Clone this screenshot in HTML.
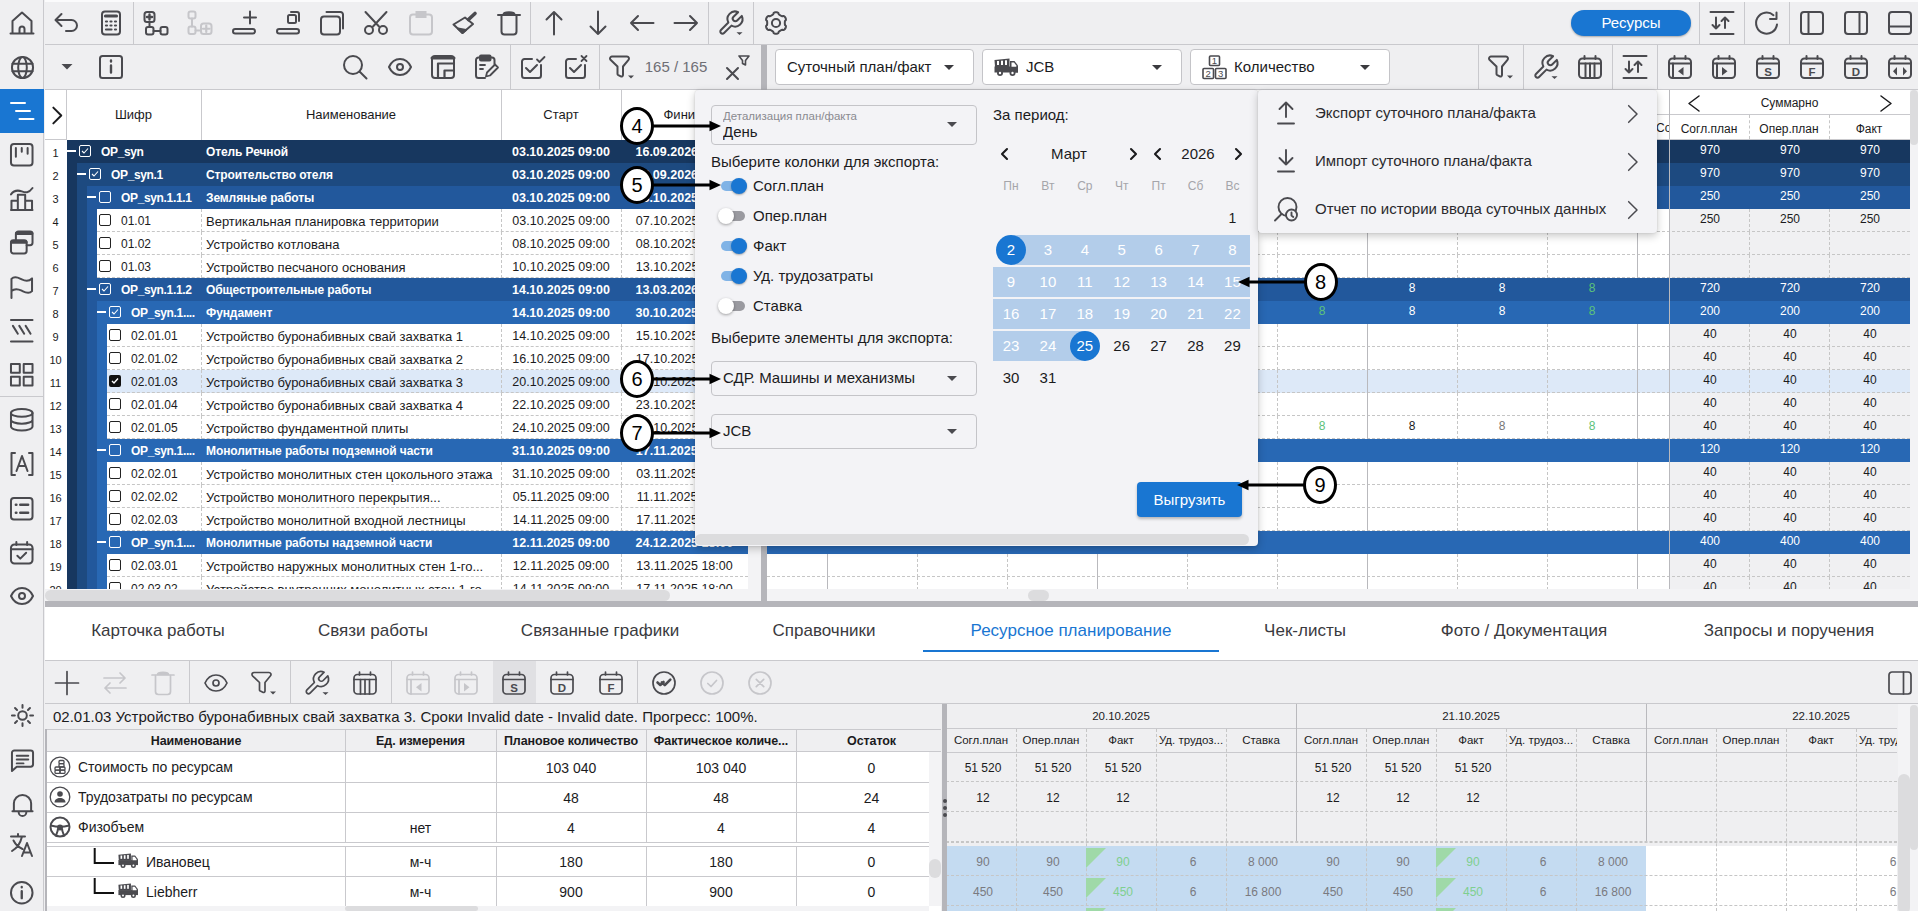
<!DOCTYPE html><html><head><meta charset="utf-8"><style>
html,body{margin:0;padding:0;}
body{width:1918px;height:911px;overflow:hidden;position:relative;background:#efeff1;font-family:"Liberation Sans",sans-serif;color:#1b1b1d;}
.a{position:absolute;box-sizing:border-box;}
.t{position:absolute;white-space:nowrap;overflow:hidden;box-sizing:border-box;}
.ic{position:absolute;overflow:visible;}
.hl{position:absolute;height:0;border-top:1px dashed #c6c6c6;}
.vl{position:absolute;width:0;border-left:1px dashed #c6c6c6;}
</style></head><body>
<div class="a" style="left:0px;top:0px;width:44px;height:911px;background:#efeff1;border-right:1px solid #c9c9cd;"></div>
<div class="a" style="left:0px;top:89px;width:44px;height:44px;background:#1976d2;"></div>
<div class="a" style="left:0px;top:396px;width:44px;height:1px;background:#c9c9cd;"></div>
<svg class="ic" style="left:10.00px;top:102.00px;width:24px;height:24px;color:#ffffff" viewBox="0 0 24 24" fill="none" stroke="currentColor" stroke-width="2.0" stroke-linecap="round" stroke-linejoin="round"><path d="M1 1h14M6 9h14M9.5 17h14"/></svg>
<svg class="ic" style="left:10.00px;top:10.80px;width:24px;height:24px;color:#4a4a4f" viewBox="0 0 24 24" fill="none" stroke="currentColor" stroke-width="2.0" stroke-linecap="round" stroke-linejoin="round"><path d="M0.5 22.5h23M2.5 22.5V10L12 1.5 21.5 10v12.5M9.5 22.5v-4.5a2.5 2.5 0 0 1 5 0v4.5"/></svg>
<svg class="ic" style="left:10.50px;top:55.50px;width:23px;height:23px;color:#4a4a4f" viewBox="0 0 24 24" fill="none" stroke="currentColor" stroke-width="2.0869565217391304" stroke-linecap="round" stroke-linejoin="round"><circle cx="12" cy="12" r="11"/><ellipse cx="12" cy="12" rx="4.5" ry="11"/><path d="M1.5 8h21M1.5 16h21"/></svg>
<svg class="ic" style="left:10.25px;top:143.25px;width:23.5px;height:23.5px;color:#4a4a4f" viewBox="0 0 24 24" fill="none" stroke="currentColor" stroke-width="2.0425531914893615" stroke-linecap="round" stroke-linejoin="round"><rect x="1" y="1" width="22" height="22" rx="3"/><path d="M6 5v9M12 5v4M18 5v6"/></svg>
<svg class="ic" style="left:10.25px;top:187.25px;width:23.5px;height:23.5px;color:#4a4a4f" viewBox="0 0 24 24" fill="none" stroke="currentColor" stroke-width="2.0425531914893615" stroke-linecap="round" stroke-linejoin="round"><path d="M1.5 23.5V14h6.5v9.5M8 23.5V8h7.5v15.5M15.5 23.5V14h7v9.5zM1 23.5h22M1 7.5C4 3.5 8 3 12 4.5S19 6.5 23 1"/></svg>
<svg class="ic" style="left:10.25px;top:231.25px;width:23.5px;height:23.5px;color:#4a4a4f" viewBox="0 0 24 24" fill="none" stroke="currentColor" stroke-width="2.0425531914893615" stroke-linecap="round" stroke-linejoin="round"><rect x="1" y="9.5" width="16" height="13.5" rx="2.5"/><path d="M6 9.5V3a2.5 2.5 0 0 1 2.5-2.5H20.5A2.5 2.5 0 0 1 23 3v9a2.5 2.5 0 0 1-2.5 2.5H17"/><path d="M1.5 11.5h15M6.5 2.5h16" stroke-width="3"/></svg>
<svg class="ic" style="left:10.25px;top:274.95px;width:23.5px;height:23.5px;color:#4a4a4f" viewBox="0 0 24 24" fill="none" stroke="currentColor" stroke-width="2.0425531914893615" stroke-linecap="round" stroke-linejoin="round"><path d="M1.5 23.5V4C5 0 9 3 12 4.5S19 7 22.5 3.5v13C19 20 15 17.5 12 16S5 13 1.5 16.5"/></svg>
<svg class="ic" style="left:10.25px;top:318.95px;width:23.5px;height:23.5px;color:#4a4a4f" viewBox="0 0 24 24" fill="none" stroke="currentColor" stroke-width="2.0425531914893615" stroke-linecap="round" stroke-linejoin="round"><path d="M1 1h22M1 23h22M3 7l5 8M9.5 7l5 8M16 7l5 8"/></svg>
<svg class="ic" style="left:10.25px;top:362.65px;width:23.5px;height:23.5px;color:#4a4a4f" viewBox="0 0 24 24" fill="none" stroke="currentColor" stroke-width="2.0425531914893615" stroke-linecap="round" stroke-linejoin="round"><rect x="1" y="1" width="9" height="9"/><rect x="14" y="1" width="9" height="9"/><rect x="1" y="14" width="9" height="9"/><rect x="14" y="14" width="9" height="9"/></svg>
<svg class="ic" style="left:10.25px;top:407.55px;width:23.5px;height:23.5px;color:#4a4a4f" viewBox="0 0 24 24" fill="none" stroke="currentColor" stroke-width="2.0425531914893615" stroke-linecap="round" stroke-linejoin="round"><ellipse cx="12" cy="5" rx="11" ry="4"/><path d="M1 5v14c0 2.2 4.9 4 11 4s11-1.8 11-4V5M1 12c0 2.2 4.9 4 11 4s11-1.8 11-4"/></svg>
<svg class="ic" style="left:10.00px;top:452.30px;width:24px;height:24px;color:#4a4a4f" viewBox="0 0 24 24" fill="none" stroke="currentColor" stroke-width="2.0" stroke-linecap="round" stroke-linejoin="round"><path d="M5 1H1.5v22H5M19 1h3.5v22H19M6.5 19L12 4l5.5 15M8.5 14h7"/></svg>
<svg class="ic" style="left:10.25px;top:496.55px;width:23.5px;height:23.5px;color:#4a4a4f" viewBox="0 0 24 24" fill="none" stroke="currentColor" stroke-width="2.0425531914893615" stroke-linecap="round" stroke-linejoin="round"><rect x="1" y="1" width="22" height="22" rx="3"/><path d="M6 8h.5M6 16h.5M10.5 8h8M10.5 16h8" stroke-width="2.6"/></svg>
<svg class="ic" style="left:10.25px;top:540.75px;width:23.5px;height:23.5px;color:#4a4a4f" viewBox="0 0 24 24" fill="none" stroke="currentColor" stroke-width="2.0425531914893615" stroke-linecap="round" stroke-linejoin="round"><rect x="1" y="3.5" width="22" height="19.5" rx="3.5"/><path d="M1 8.5h22M6.5 1v3M17.5 1v3"/><path d="M7.5 15l3 3 6-6"/></svg>
<svg class="ic" style="left:10.00px;top:584.30px;width:24px;height:24px;color:#4a4a4f" viewBox="0 0 24 24" fill="none" stroke="currentColor" stroke-width="2.0" stroke-linecap="round" stroke-linejoin="round"><path d="M1 12C3.5 6.5 7.5 4 12 4s8.5 2.5 11 8c-2.5 5.5-6.5 8-11 8S3.5 17.5 1 12z"/><circle cx="12" cy="12" r="3"/></svg>
<svg class="ic" style="left:10.50px;top:704.00px;width:23px;height:23px;color:#4a4a4f" viewBox="0 0 24 24" fill="none" stroke="currentColor" stroke-width="2.0869565217391304" stroke-linecap="round" stroke-linejoin="round"><circle cx="12" cy="12" r="4.5"/><path d="M12 1v3M12 20v3M1 12h3M20 12h3M4.2 4.2l2.1 2.1M17.7 17.7l2.1 2.1M4.2 19.8l2.1-2.1M17.7 6.3l2.1-2.1"/></svg>
<svg class="ic" style="left:10.50px;top:748.50px;width:23px;height:23px;color:#4a4a4f" viewBox="0 0 24 24" fill="none" stroke="currentColor" stroke-width="2.0869565217391304" stroke-linecap="round" stroke-linejoin="round"><path d="M1 4a2.5 2.5 0 0 1 2.5-2.5h17A2.5 2.5 0 0 1 23 4v12a2.5 2.5 0 0 1-2.5 2.5H6L1 23z"/><path d="M6 7h12M6 11h12M6 15h7"/></svg>
<svg class="ic" style="left:10.50px;top:792.50px;width:23px;height:23px;color:#4a4a4f" viewBox="0 0 24 24" fill="none" stroke="currentColor" stroke-width="2.0869565217391304" stroke-linecap="round" stroke-linejoin="round"><path d="M3 19V11a9 9 0 0 1 18 0v8zM1.5 19h21M8 20a4 4 0 0 0 8 0"/></svg>
<svg class="ic" style="left:10.00px;top:833.00px;width:24px;height:24px;color:#4a4a4f" viewBox="0 0 24 24" fill="none" stroke="currentColor" stroke-width="2.0" stroke-linecap="round" stroke-linejoin="round"><path d="M1 3.5h14M8 1v2.5M12 3.5C10 12 6.5 15 2 18M3.5 7.5c2 4 5.5 7 9 8.5M12 23l5-13 5 13M13.5 19.5h7"/></svg>
<svg class="ic" style="left:10.25px;top:880.75px;width:23.5px;height:23.5px;color:#4a4a4f" viewBox="0 0 24 24" fill="none" stroke="currentColor" stroke-width="2.0425531914893615" stroke-linecap="round" stroke-linejoin="round"><circle cx="12" cy="12" r="11"/><path d="M12 10.5v7M12 6v.5" stroke-width="2.4"/></svg>
<div class="a" style="left:45px;top:0px;width:1873px;height:45px;background:#efeff1;border-bottom:1px solid #c9c9cd;"></div>
<div class="a" style="left:45px;top:0px;width:1873px;height:2px;background:#fbfbfc;"></div>
<div class="a" style="left:133px;top:2px;width:1px;height:42px;background:#c9c9cd;"></div>
<div class="a" style="left:530px;top:2px;width:1px;height:42px;background:#c9c9cd;"></div>
<div class="a" style="left:708px;top:2px;width:1px;height:42px;background:#c9c9cd;"></div>
<div class="a" style="left:753px;top:2px;width:1px;height:42px;background:#c9c9cd;"></div>
<div class="a" style="left:1699px;top:2px;width:1px;height:42px;background:#c9c9cd;"></div>
<div class="a" style="left:1744px;top:2px;width:1px;height:42px;background:#c9c9cd;"></div>
<div class="a" style="left:1789px;top:2px;width:1px;height:42px;background:#c9c9cd;"></div>
<svg class="ic" style="left:55.00px;top:11.00px;width:24px;height:24px;color:#4a4a4f" viewBox="0 0 24 24" fill="none" stroke="currentColor" stroke-width="2.0" stroke-linecap="round" stroke-linejoin="round"><path d="M6.5 3L0.5 9l6 6"/><path d="M1 9H16.5a5.5 5.5 0 0 1 0 11H11"/></svg>
<svg class="ic" style="left:99.00px;top:11.00px;width:24px;height:24px;color:#4a4a4f" viewBox="0 0 24 24" fill="none" stroke="currentColor" stroke-width="2.0" stroke-linecap="round" stroke-linejoin="round"><rect x="3" y="0.5" width="18" height="23" rx="3"/><path d="M6.5 5h11" stroke-width="3.2"/><path d="M7 10.5h1M11.5 10.5h1M16 10.5h1M7 14.5h1M11.5 14.5h1M16 14.5h1M7 18.5h5.5M16 18.5h1" stroke-width="2.2"/></svg>
<svg class="ic" style="left:144.00px;top:11.00px;width:24px;height:24px;color:#4a4a4f" viewBox="0 0 24 24" fill="none" stroke="currentColor" stroke-width="2.0" stroke-linecap="round" stroke-linejoin="round"><rect x="0.5" y="1" width="10" height="10" rx="2.5"/><path d="M5.5 3.5v5M3 6h5" stroke-width="2.4"/><path d="M5.5 11v5M9.5 20h7"/><rect x="2" y="16" width="7.5" height="7.5" rx="2"/><rect x="16.5" y="16" width="7" height="7.5" rx="2"/></svg>
<svg class="ic" style="left:188.00px;top:11.00px;width:24px;height:24px;color:#c6c6ca" viewBox="0 0 24 24" fill="none" stroke="currentColor" stroke-width="2.0" stroke-linecap="round" stroke-linejoin="round"><rect x="0.5" y="0.5" width="7" height="7" rx="2"/><path d="M4 7.5v8M7.5 19.5h4"/><rect x="0.5" y="15.5" width="7" height="7.5" rx="2"/><rect x="13" y="12.5" width="10.5" height="10.5" rx="2.5"/><path d="M18.25 14.5v6.5M15 17.75h6.5" stroke-width="2.2"/></svg>
<svg class="ic" style="left:232.00px;top:11.00px;width:24px;height:24px;color:#4a4a4f" viewBox="0 0 24 24" fill="none" stroke="currentColor" stroke-width="2.0" stroke-linecap="round" stroke-linejoin="round"><rect x="1" y="18" width="22" height="4.5" rx="2.25"/><path d="M18 0.5v12M12 6.5h12"/></svg>
<svg class="ic" style="left:276.00px;top:11.00px;width:24px;height:24px;color:#4a4a4f" viewBox="0 0 24 24" fill="none" stroke="currentColor" stroke-width="2.0" stroke-linecap="round" stroke-linejoin="round"><rect x="1" y="18" width="22" height="4.5" rx="2.25"/><rect x="12" y="4" width="8" height="8" rx="1.5"/><path d="M15 1h6a2 2 0 0 1 2 2v7"/></svg>
<svg class="ic" style="left:320.00px;top:11.00px;width:24px;height:24px;color:#4a4a4f" viewBox="0 0 24 24" fill="none" stroke="currentColor" stroke-width="2.0" stroke-linecap="round" stroke-linejoin="round"><rect x="1" y="5.5" width="19" height="18" rx="3"/><path d="M6.5 1h14a2.5 2.5 0 0 1 2.5 2.5v14"/></svg>
<svg class="ic" style="left:364.20px;top:11.00px;width:24px;height:24px;color:#4a4a4f" viewBox="0 0 24 24" fill="none" stroke="currentColor" stroke-width="2.0" stroke-linecap="round" stroke-linejoin="round"><circle cx="5" cy="19" r="4"/><circle cx="19" cy="19" r="4"/><path d="M1.5 1L15 15.5M22.5 1L9 15.5" /></svg>
<svg class="ic" style="left:408.50px;top:11.00px;width:24px;height:24px;color:#c6c6ca" viewBox="0 0 24 24" fill="none" stroke="currentColor" stroke-width="2.0" stroke-linecap="round" stroke-linejoin="round"><rect x="1" y="3.5" width="22" height="20" rx="3"/><rect x="6.5" y="0" width="11" height="7" fill="currentColor" stroke="none"/></svg>
<svg class="ic" style="left:453.00px;top:11.00px;width:24px;height:24px;color:#4a4a4f" viewBox="0 0 24 24" fill="none" stroke="currentColor" stroke-width="2.0" stroke-linecap="round" stroke-linejoin="round"><path d="M0.5 13.5L12 6.5l8 6.5-10.5 9z"/><path d="M5 17.5l4.5 4.5 3.5-3z" fill="currentColor"/><path d="M15.5 8.5L22 2.5" stroke-width="3.6"/></svg>
<svg class="ic" style="left:496.50px;top:11.00px;width:24px;height:24px;color:#4a4a4f" viewBox="0 0 24 24" fill="none" stroke="currentColor" stroke-width="2.0" stroke-linecap="round" stroke-linejoin="round"><path d="M1 4h22"/><path d="M6.5 3.5C6.5 0.5 17.5 0.5 17.5 3.5z" fill="currentColor"/><path d="M4.5 4.5v16a3 3 0 0 0 3 3h9a3 3 0 0 0 3-3v-16"/></svg>
<svg class="ic" style="left:541.50px;top:11.00px;width:24px;height:24px;color:#4a4a4f" viewBox="0 0 24 24" fill="none" stroke="currentColor" stroke-width="2.0" stroke-linecap="round" stroke-linejoin="round"><path d="M12 23.5V1M4.5 8.5L12 1l7.5 7.5"/></svg>
<svg class="ic" style="left:585.50px;top:11.00px;width:24px;height:24px;color:#4a4a4f" viewBox="0 0 24 24" fill="none" stroke="currentColor" stroke-width="2.0" stroke-linecap="round" stroke-linejoin="round"><path d="M12 0.5V23M4.5 15.5L12 23l7.5-7.5"/></svg>
<svg class="ic" style="left:629.80px;top:11.00px;width:24px;height:24px;color:#4a4a4f" viewBox="0 0 24 24" fill="none" stroke="currentColor" stroke-width="2.0" stroke-linecap="round" stroke-linejoin="round"><path d="M23.5 12H1M8 5L1 12l7 7"/></svg>
<svg class="ic" style="left:674.00px;top:11.00px;width:24px;height:24px;color:#4a4a4f" viewBox="0 0 24 24" fill="none" stroke="currentColor" stroke-width="2.0" stroke-linecap="round" stroke-linejoin="round"><path d="M0.5 12H23M16 5l7 7-7 7"/></svg>
<svg class="ic" style="left:719.00px;top:11.00px;width:24px;height:24px;color:#4a4a4f" viewBox="0 0 24 24" fill="none" stroke="currentColor" stroke-width="2.0" stroke-linecap="round" stroke-linejoin="round"><path d="M19.13 1.19L14.51 5.81A2.6 2.6 0 0 0 18.19 9.49L22.81 4.87A7.5 7.5 0 0 1 12.49 14.63L5.06 22.06A2.2 2.2 0 0 1 1.94 18.94L9.37 11.51A7.5 7.5 0 0 1 19.13 1.19Z"/><path d="M17.5 21.3h6l-3 2.7z" fill="currentColor" stroke="none"/></svg>
<svg class="ic" style="left:763.70px;top:11.00px;width:24px;height:24px;color:#4a4a4f" viewBox="0 0 24 24" fill="none" stroke="currentColor" stroke-width="2.0" stroke-linecap="round" stroke-linejoin="round"><circle cx="12" cy="12" r="4.1"/><path d="M20.80 12.00 L20.80 12.31 L20.81 12.62 L20.83 12.93 L20.86 13.25 L20.90 13.57 L20.97 13.91 L21.12 14.27 L21.81 14.81 L21.91 15.22 L21.92 15.61 L21.88 15.99 L21.79 16.36 L21.68 16.72 L21.53 17.07 L21.35 17.40 L21.15 17.72 L20.92 18.02 L20.67 18.30 L20.39 18.56 L20.09 18.79 L19.75 18.98 L19.34 19.09 L18.53 18.76 L18.14 18.82 L17.81 18.93 L17.51 19.05 L17.22 19.19 L16.94 19.32 L16.67 19.47 L16.40 19.62 L16.14 19.78 L15.87 19.94 L15.61 20.11 L15.35 20.30 L15.09 20.50 L14.84 20.73 L14.59 21.03 L14.47 21.90 L14.17 22.20 L13.83 22.40 L13.48 22.55 L13.12 22.66 L12.75 22.74 L12.38 22.78 L12.00 22.80 L11.62 22.78 L11.25 22.74 L10.88 22.66 L10.52 22.55 L10.17 22.40 L9.83 22.20 L9.53 21.90 L9.41 21.03 L9.16 20.73 L8.91 20.50 L8.65 20.30 L8.39 20.11 L8.13 19.94 L7.86 19.78 L7.60 19.62 L7.33 19.47 L7.06 19.32 L6.78 19.19 L6.49 19.05 L6.19 18.93 L5.86 18.82 L5.47 18.76 L4.66 19.09 L4.25 18.98 L3.91 18.79 L3.61 18.56 L3.33 18.30 L3.08 18.02 L2.85 17.72 L2.65 17.40 L2.47 17.07 L2.32 16.72 L2.21 16.36 L2.12 15.99 L2.08 15.61 L2.09 15.22 L2.19 14.81 L2.88 14.27 L3.03 13.91 L3.10 13.57 L3.14 13.25 L3.17 12.93 L3.19 12.62 L3.20 12.31 L3.20 12.00 L3.20 11.69 L3.19 11.38 L3.17 11.07 L3.14 10.75 L3.10 10.43 L3.03 10.09 L2.88 9.73 L2.19 9.19 L2.09 8.78 L2.08 8.39 L2.12 8.01 L2.21 7.64 L2.32 7.28 L2.47 6.93 L2.65 6.60 L2.85 6.28 L3.08 5.98 L3.33 5.70 L3.61 5.44 L3.91 5.21 L4.25 5.02 L4.66 4.91 L5.47 5.24 L5.86 5.18 L6.19 5.07 L6.49 4.95 L6.78 4.81 L7.06 4.68 L7.33 4.53 L7.60 4.38 L7.86 4.22 L8.13 4.06 L8.39 3.89 L8.65 3.70 L8.91 3.50 L9.16 3.27 L9.41 2.97 L9.53 2.10 L9.83 1.80 L10.17 1.60 L10.52 1.45 L10.88 1.34 L11.25 1.26 L11.62 1.22 L12.00 1.20 L12.38 1.22 L12.75 1.26 L13.12 1.34 L13.48 1.45 L13.83 1.60 L14.17 1.80 L14.47 2.10 L14.59 2.97 L14.84 3.27 L15.09 3.50 L15.35 3.70 L15.61 3.89 L15.87 4.06 L16.14 4.22 L16.40 4.38 L16.67 4.53 L16.94 4.68 L17.22 4.81 L17.51 4.95 L17.81 5.07 L18.14 5.18 L18.53 5.24 L19.34 4.91 L19.75 5.02 L20.09 5.21 L20.39 5.44 L20.67 5.70 L20.92 5.98 L21.15 6.28 L21.35 6.60 L21.53 6.93 L21.68 7.28 L21.79 7.64 L21.88 8.01 L21.92 8.39 L21.91 8.78 L21.81 9.19 L21.12 9.73 L20.97 10.09 L20.90 10.43 L20.86 10.75 L20.83 11.07 L20.81 11.38 L20.80 11.69Z"/></svg>
<svg class="ic" style="left:1710.00px;top:11.00px;width:24px;height:24px;color:#4a4a4f" viewBox="0 0 24 24" fill="none" stroke="currentColor" stroke-width="2.0" stroke-linecap="round" stroke-linejoin="round"><path d="M0.5 1h23M0.5 23h23M6 6.5v11M2.5 14l3.5 3.5 3.5-3.5M15 17V6.5M11.5 10L15 6.5 18.5 10"/></svg>
<svg class="ic" style="left:1755.00px;top:11.00px;width:24px;height:24px;color:#4a4a4f" viewBox="0 0 24 24" fill="none" stroke="currentColor" stroke-width="2.0" stroke-linecap="round" stroke-linejoin="round"><path d="M22 13.5A10.5 10.5 0 1 1 18.5 4.2"/><path d="M21.5 1.5v6.5h-6.5"/></svg>
<svg class="ic" style="left:1800.00px;top:11.00px;width:24px;height:24px;color:#4a4a4f" viewBox="0 0 24 24" fill="none" stroke="currentColor" stroke-width="2.0" stroke-linecap="round" stroke-linejoin="round"><rect x="1" y="1" width="22" height="22" rx="3"/><path d="M8.5 1v22"/></svg>
<svg class="ic" style="left:1844.00px;top:11.00px;width:24px;height:24px;color:#4a4a4f" viewBox="0 0 24 24" fill="none" stroke="currentColor" stroke-width="2.0" stroke-linecap="round" stroke-linejoin="round"><rect x="1" y="1" width="22" height="22" rx="3"/><path d="M15.5 1v22"/></svg>
<svg class="ic" style="left:1888.00px;top:11.00px;width:24px;height:24px;color:#4a4a4f" viewBox="0 0 24 24" fill="none" stroke="currentColor" stroke-width="2.0" stroke-linecap="round" stroke-linejoin="round"><rect x="1" y="1" width="22" height="22" rx="3"/><path d="M1 15.5h22"/></svg>
<div class="a" style="left:1571px;top:10px;width:120px;height:26px;background:#1976d2;border-radius:13px;box-shadow:0 1px 2px rgba(0,0,0,.3);"></div>
<div class="t" style="left:1571px;top:10px;width:120px;height:26px;line-height:26px;text-align:center;color:#fff;font-size:15px;">Ресурсы</div>
<div class="a" style="left:45px;top:45px;width:1873px;height:45px;background:#efeff1;border-bottom:1px solid #c9c9cd;"></div>
<div class="a" style="left:510px;top:45px;width:1px;height:44px;background:#c9c9cd;"></div>
<div class="a" style="left:599px;top:45px;width:1px;height:44px;background:#c9c9cd;"></div>
<div class="a" style="left:1478px;top:45px;width:1px;height:44px;background:#c9c9cd;"></div>
<div class="a" style="left:1523px;top:45px;width:1px;height:44px;background:#c9c9cd;"></div>
<div class="a" style="left:1612px;top:45px;width:1px;height:44px;background:#c9c9cd;"></div>
<div class="a" style="left:1657px;top:45px;width:1px;height:44px;background:#c9c9cd;"></div>
<svg class="ic" style="left:60px;top:63px;width:14px;height:8px" viewBox="0 0 14 8"><path d="M1.5 1h11l-5.5 5.5z" fill="#4a4a4f"/></svg>
<svg class="ic" style="left:99.00px;top:55.00px;width:24px;height:24px;color:#4a4a4f" viewBox="0 0 24 24" fill="none" stroke="currentColor" stroke-width="2.0" stroke-linecap="round" stroke-linejoin="round"><rect x="1" y="1" width="22" height="22" rx="2.5"/><path d="M12 10.5v7M12 5.5v1" stroke-width="2.4"/></svg>
<svg class="ic" style="left:343.20px;top:55.00px;width:24px;height:24px;color:#4a4a4f" viewBox="0 0 24 24" fill="none" stroke="currentColor" stroke-width="2.0" stroke-linecap="round" stroke-linejoin="round"><circle cx="10" cy="10" r="9"/><path d="M16.5 16.5l7 7"/></svg>
<svg class="ic" style="left:387.50px;top:55.00px;width:24px;height:24px;color:#4a4a4f" viewBox="0 0 24 24" fill="none" stroke="currentColor" stroke-width="2.0" stroke-linecap="round" stroke-linejoin="round"><path d="M1 12C3.5 6.5 7.5 4 12 4s8.5 2.5 11 8c-2.5 5.5-6.5 8-11 8S3.5 17.5 1 12z"/><circle cx="12" cy="12" r="3"/></svg>
<svg class="ic" style="left:431.20px;top:55.00px;width:24px;height:24px;color:#4a4a4f" viewBox="0 0 24 24" fill="none" stroke="currentColor" stroke-width="2.0" stroke-linecap="round" stroke-linejoin="round"><rect x="1" y="1" width="22" height="22" rx="3"/><path d="M1 3h22" stroke-width="3"/><path d="M7 23V8.5h16M13.5 23v-7.5H23" stroke-width="2.2"/></svg>
<svg class="ic" style="left:475.20px;top:55.00px;width:24px;height:24px;color:#4a4a4f" viewBox="0 0 24 24" fill="none" stroke="currentColor" stroke-width="2.0" stroke-linecap="round" stroke-linejoin="round"><path d="M10 23H3.5A2.5 2.5 0 0 1 1 20.5V5a2.5 2.5 0 0 1 2.5-2.5H17A2.5 2.5 0 0 1 19.5 5v4"/><rect x="5" y="0.5" width="10.5" height="5" rx="1" fill="currentColor"/><path d="M5 10h5M5 14h3" stroke-width="1.8"/><path d="M11 21.5l1-4 8-8 3 3-8 8z" stroke-width="1.8"/></svg>
<svg class="ic" style="left:521.00px;top:55.00px;width:24px;height:24px;color:#4a4a4f" viewBox="0 0 24 24" fill="none" stroke="currentColor" stroke-width="2.0" stroke-linecap="round" stroke-linejoin="round"><path d="M20 10v10.5a2.5 2.5 0 0 1-2.5 2.5h-14A2.5 2.5 0 0 1 1 20.5v-14A2.5 2.5 0 0 1 3.5 4H11"/><path d="M5 13l4 4 7-7"/><path d="M16 4.5l2.5 2.5 5-5" stroke-width="1.8"/></svg>
<svg class="ic" style="left:564.50px;top:55.00px;width:24px;height:24px;color:#4a4a4f" viewBox="0 0 24 24" fill="none" stroke="currentColor" stroke-width="2.0" stroke-linecap="round" stroke-linejoin="round"><path d="M20 10v10.5a2.5 2.5 0 0 1-2.5 2.5h-14A2.5 2.5 0 0 1 1 20.5v-14A2.5 2.5 0 0 1 3.5 4H11"/><path d="M5 13l4 4 7-7"/><path d="M16.5 1l5 5M21.5 1l-5 5" stroke-width="1.8"/></svg>
<svg class="ic" style="left:609.00px;top:55.00px;width:24px;height:24px;color:#4a4a4f" viewBox="0 0 24 24" fill="none" stroke="currentColor" stroke-width="2.0" stroke-linecap="round" stroke-linejoin="round"><path d="M1 3.5a2 2 0 0 1 2-2h15a2 2 0 0 1 1.5 3.3L14 11.5V20a1.5 1.5 0 0 1-2.2 1.3l-2.5-1.2A1.5 1.5 0 0 1 8.5 19v-7.5L1.5 4.8A2 2 0 0 1 1 3.5z"/><path d="M19 20.5h6l-3 3z" fill="currentColor" stroke="none"/></svg>
<svg class="ic" style="left:726.00px;top:55.00px;width:24px;height:24px;color:#4a4a4f" viewBox="0 0 24 24" fill="none" stroke="currentColor" stroke-width="2.0" stroke-linecap="round" stroke-linejoin="round"><path d="M1 13l11 11M12 13L1 24"/><path d="M13 1h10l-3.5 4.5v4.5l-3-1.5v-3z" stroke-width="1.6"/></svg>
<svg class="ic" style="left:1488.00px;top:55.00px;width:24px;height:24px;color:#4a4a4f" viewBox="0 0 24 24" fill="none" stroke="currentColor" stroke-width="2.0" stroke-linecap="round" stroke-linejoin="round"><path d="M1 3.5a2 2 0 0 1 2-2h15a2 2 0 0 1 1.5 3.3L14 11.5V20a1.5 1.5 0 0 1-2.2 1.3l-2.5-1.2A1.5 1.5 0 0 1 8.5 19v-7.5L1.5 4.8A2 2 0 0 1 1 3.5z"/><path d="M19 20.5h6l-3 3z" fill="currentColor" stroke="none"/></svg>
<svg class="ic" style="left:1534.00px;top:55.00px;width:24px;height:24px;color:#4a4a4f" viewBox="0 0 24 24" fill="none" stroke="currentColor" stroke-width="2.0" stroke-linecap="round" stroke-linejoin="round"><path d="M19.13 1.19L14.51 5.81A2.6 2.6 0 0 0 18.19 9.49L22.81 4.87A7.5 7.5 0 0 1 12.49 14.63L5.06 22.06A2.2 2.2 0 0 1 1.94 18.94L9.37 11.51A7.5 7.5 0 0 1 19.13 1.19Z"/><path d="M17.5 21.3h6l-3 2.7z" fill="currentColor" stroke="none"/></svg>
<svg class="ic" style="left:1578.00px;top:55.00px;width:24px;height:24px;color:#4a4a4f" viewBox="0 0 24 24" fill="none" stroke="currentColor" stroke-width="2.0" stroke-linecap="round" stroke-linejoin="round"><rect x="1" y="3.5" width="22" height="19.5" rx="3.5"/><path d="M1 8.5h22M6.5 1v3M17.5 1v3"/><path d="M7.5 8.5v14.5M12 8.5v14.5M16.5 8.5v14.5"/></svg>
<svg class="ic" style="left:1623.00px;top:55.00px;width:24px;height:24px;color:#4a4a4f" viewBox="0 0 24 24" fill="none" stroke="currentColor" stroke-width="2.0" stroke-linecap="round" stroke-linejoin="round"><path d="M0.5 1h23M0.5 23h23M6 6.5v11M2.5 14l3.5 3.5 3.5-3.5M15 17V6.5M11.5 10L15 6.5 18.5 10"/></svg>
<svg class="ic" style="left:1668.00px;top:55.00px;width:24px;height:24px;color:#4a4a4f" viewBox="0 0 24 24" fill="none" stroke="currentColor" stroke-width="2.0" stroke-linecap="round" stroke-linejoin="round"><rect x="1" y="3.5" width="22" height="19.5" rx="3.5"/><path d="M1 8.5h22M6.5 1v3M17.5 1v3"/><path d="M5 8.5v14.5"/><path d="M15.5 12v8.5l-5.5-4.25z" fill="currentColor" stroke="none"/></svg>
<svg class="ic" style="left:1712.00px;top:55.00px;width:24px;height:24px;color:#4a4a4f" viewBox="0 0 24 24" fill="none" stroke="currentColor" stroke-width="2.0" stroke-linecap="round" stroke-linejoin="round"><rect x="1" y="3.5" width="22" height="19.5" rx="3.5"/><path d="M1 8.5h22M6.5 1v3M17.5 1v3"/><path d="M5 8.5v14.5"/><path d="M10 12v8.5l5.5-4.25z" fill="currentColor" stroke="none"/></svg>
<svg class="ic" style="left:1756.00px;top:55.00px;width:24px;height:24px;color:#4a4a4f" viewBox="0 0 24 24" fill="none" stroke="currentColor" stroke-width="2.0" stroke-linecap="round" stroke-linejoin="round"><rect x="1" y="3.5" width="22" height="19.5" rx="3.5"/><path d="M1 8.5h22M6.5 1v3M17.5 1v3"/><text x="12" y="20.5" font-size="11.5" font-weight="bold" text-anchor="middle" fill="currentColor" stroke="none" font-family="Liberation Sans">S</text></svg>
<svg class="ic" style="left:1800.00px;top:55.00px;width:24px;height:24px;color:#4a4a4f" viewBox="0 0 24 24" fill="none" stroke="currentColor" stroke-width="2.0" stroke-linecap="round" stroke-linejoin="round"><rect x="1" y="3.5" width="22" height="19.5" rx="3.5"/><path d="M1 8.5h22M6.5 1v3M17.5 1v3"/><text x="12" y="20.5" font-size="11.5" font-weight="bold" text-anchor="middle" fill="currentColor" stroke="none" font-family="Liberation Sans">F</text></svg>
<svg class="ic" style="left:1844.00px;top:55.00px;width:24px;height:24px;color:#4a4a4f" viewBox="0 0 24 24" fill="none" stroke="currentColor" stroke-width="2.0" stroke-linecap="round" stroke-linejoin="round"><rect x="1" y="3.5" width="22" height="19.5" rx="3.5"/><path d="M1 8.5h22M6.5 1v3M17.5 1v3"/><text x="12" y="20.5" font-size="11.5" font-weight="bold" text-anchor="middle" fill="currentColor" stroke="none" font-family="Liberation Sans">D</text></svg>
<svg class="ic" style="left:1888.00px;top:55.00px;width:24px;height:24px;color:#4a4a4f" viewBox="0 0 24 24" fill="none" stroke="currentColor" stroke-width="2.0" stroke-linecap="round" stroke-linejoin="round"><rect x="1" y="3.5" width="22" height="19.5" rx="3.5"/><path d="M1 8.5h22M6.5 1v3M17.5 1v3"/><path d="M9 12v8.5l-4-4.25zM15 12v8.5l4-4.25z" fill="currentColor" stroke="none"/></svg>
<div class="t" style="left:640px;top:56px;width:72px;height:22px;line-height:22px;text-align:center;font-size:15px;color:#6e6e74;">165 / 165</div>
<div class="a" style="left:775px;top:49px;width:199px;height:36px;background:#fff;border:1px solid #c4c4c8;border-radius:4px;"></div>
<svg class="ic" style="left:943px;top:64px;width:12px;height:8px" viewBox="0 0 12 8"><path d="M1 1h10l-5 5z" fill="#3a3a3e"/></svg>
<div class="t" style="left:787px;top:56px;width:153px;height:22px;line-height:22px;text-align:left;font-size:15px;color:#1b1b1d;">Суточный план/факт</div>
<div class="a" style="left:982px;top:49px;width:200px;height:36px;background:#fff;border:1px solid #c4c4c8;border-radius:4px;"></div>
<svg class="ic" style="left:1151px;top:64px;width:12px;height:8px" viewBox="0 0 12 8"><path d="M1 1h10l-5 5z" fill="#3a3a3e"/></svg>
<div class="t" style="left:1026px;top:56px;width:122px;height:22px;line-height:22px;text-align:left;font-size:15px;color:#1b1b1d;">JCB</div>
<svg class="ic" style="left:994px;top:58px;width:24px;height:18px" viewBox="0 0 24 18"><g fill="#4a4a4f"><path d="M0.5 2L15.5 0.5V9H1z"/><path d="M16 3h4.5l3.5 4.5V14.5H16z"/><rect x="0.5" y="8.5" width="23.5" height="6"/><circle cx="6" cy="15" r="3"/><circle cx="18.5" cy="15" r="3"/></g><g fill="#fff"><rect x="3" y="3" width="2" height="4"/><rect x="7" y="2.7" width="2" height="4.3"/><rect x="11" y="2.3" width="2" height="4.7"/><path d="M17.5 4.5h2.5l2.3 3v1.2H17.5z"/><circle cx="6" cy="15" r="1.2"/><circle cx="18.5" cy="15" r="1.2"/></g></svg>
<div class="a" style="left:1190px;top:49px;width:200px;height:36px;background:#fff;border:1px solid #c4c4c8;border-radius:4px;"></div>
<svg class="ic" style="left:1359px;top:64px;width:12px;height:8px" viewBox="0 0 12 8"><path d="M1 1h10l-5 5z" fill="#3a3a3e"/></svg>
<div class="t" style="left:1234px;top:56px;width:122px;height:22px;line-height:22px;text-align:left;font-size:15px;color:#1b1b1d;">Количество</div>
<svg class="ic" style="left:1202px;top:55px;width:25px;height:24px" viewBox="0 0 25 24"><g fill="none" stroke="#4a4a4f" stroke-width="1.6"><rect x="7.5" y="1" width="10" height="9.5" rx="1"/><rect x="1" y="13.5" width="10.5" height="10" rx="1"/><rect x="13.5" y="13.5" width="10.5" height="10" rx="1"/></g><g font-family="Liberation Sans" font-size="9.5" fill="#4a4a4f" text-anchor="middle"><text x="12.5" y="9.2">1</text><text x="6.25" y="21.8">2</text><text x="18.75" y="21.8">3</text></g></svg>
<div class="a" style="left:761px;top:45px;width:6px;height:562px;background:#b5b5ba;"></div>
<div class="a" style="left:45px;top:90px;width:716px;height:517px;background:#fff;"></div>
<div class="a" style="left:45px;top:90px;width:21px;height:50px;background:#fff;border-bottom:1px solid #c9c9cd;"></div>
<svg class="ic" style="left:46.50px;top:105.50px;width:19px;height:19px;color:#1b1b1d" viewBox="0 0 24 24" fill="none" stroke="currentColor" stroke-width="2.5" stroke-linecap="round" stroke-linejoin="round"><path d="M8 2l10 10-10 10"/></svg>
<div class="a" style="left:66px;top:90px;width:1px;height:50px;background:#c9c9cd;"></div>
<div class="a" style="left:201px;top:90px;width:1px;height:50px;background:#c9c9cd;"></div>
<div class="a" style="left:501px;top:90px;width:1px;height:50px;background:#c9c9cd;"></div>
<div class="a" style="left:621px;top:90px;width:1px;height:50px;background:#c9c9cd;"></div>
<div class="t" style="left:66px;top:90px;width:135px;height:50px;line-height:50px;text-align:center;font-size:13px;">Шифр</div>
<div class="t" style="left:201px;top:90px;width:300px;height:50px;line-height:50px;text-align:center;font-size:13px;">Наименование</div>
<div class="t" style="left:501px;top:90px;width:120px;height:50px;line-height:50px;text-align:center;font-size:13px;">Старт</div>
<div class="t" style="left:621px;top:90px;width:127px;height:50px;line-height:50px;text-align:center;font-size:13px;">Финиш</div>
<div class="a" style="left:45px;top:140px;width:716px;height:449px;overflow:hidden;">
<div class="t" style="left:0px;top:1.5px;width:21px;height:23px;line-height:23px;text-align:center;font-size:11px;color:#1b1b1d;">1</div>
<div class="a" style="left:22px;top:0px;width:681px;height:23px;background:#17375f;"></div>
<div class="a" style="left:22px;top:10px;width:9px;height:2px;background:#fff;"></div>
<div class="a" style="left:34px;top:5px;width:12px;height:12px;border:1.3px solid #fff;border-radius:2px;"></div>
<svg class="ic" style="left:36px;top:7px;width:8px;height:8px" viewBox="0 0 8 8"><path d="M1 4l2 2 4-4.5" fill="none" stroke="#fff" stroke-width="1.1"/></svg>
<div class="t" style="left:56px;top:1px;width:98px;height:23px;line-height:23px;text-align:left;font-size:12px;color:#fff;font-weight:bold;letter-spacing:-0.35px;">OP_syn</div>
<div class="t" style="left:161px;top:1px;width:295px;height:23px;line-height:23px;text-align:left;font-size:12px;color:#fff;font-weight:bold;letter-spacing:-0.1px;">Отель Речной</div>
<div class="t" style="left:456px;top:1px;width:120px;height:23px;line-height:23px;text-align:center;font-size:12.5px;color:#fff;font-weight:bold;">03.10.2025 09:00</div>
<div class="t" style="left:576px;top:1px;width:127px;height:23px;line-height:23px;text-align:center;font-size:12.5px;color:#fff;font-weight:bold;">16.09.2026 18:00</div>
<div class="t" style="left:0px;top:24.5px;width:21px;height:23px;line-height:23px;text-align:center;font-size:11px;color:#1b1b1d;">2</div>
<div class="a" style="left:22px;top:23px;width:10px;height:23px;background:#17375f;"></div>
<div class="a" style="left:32px;top:23px;width:671px;height:23px;background:#1d4a80;"></div>
<div class="a" style="left:32px;top:33px;width:9px;height:2px;background:#fff;"></div>
<div class="a" style="left:44px;top:28px;width:12px;height:12px;border:1.3px solid #fff;border-radius:2px;"></div>
<svg class="ic" style="left:46px;top:30px;width:8px;height:8px" viewBox="0 0 8 8"><path d="M1 4l2 2 4-4.5" fill="none" stroke="#fff" stroke-width="1.1"/></svg>
<div class="t" style="left:66px;top:24px;width:88px;height:23px;line-height:23px;text-align:left;font-size:12px;color:#fff;font-weight:bold;letter-spacing:-0.35px;">OP_syn.1</div>
<div class="t" style="left:161px;top:24px;width:295px;height:23px;line-height:23px;text-align:left;font-size:12px;color:#fff;font-weight:bold;letter-spacing:-0.1px;">Строительство отеля</div>
<div class="t" style="left:456px;top:24px;width:120px;height:23px;line-height:23px;text-align:center;font-size:12.5px;color:#fff;font-weight:bold;">03.10.2025 09:00</div>
<div class="t" style="left:576px;top:24px;width:127px;height:23px;line-height:23px;text-align:center;font-size:12.5px;color:#fff;font-weight:bold;">16.09.2026 18:00</div>
<div class="t" style="left:0px;top:47.5px;width:21px;height:23px;line-height:23px;text-align:center;font-size:11px;color:#1b1b1d;">3</div>
<div class="a" style="left:22px;top:46px;width:10px;height:23px;background:#17375f;"></div>
<div class="a" style="left:32px;top:46px;width:10px;height:23px;background:#1d4a80;"></div>
<div class="a" style="left:42px;top:46px;width:661px;height:23px;background:#22589c;"></div>
<div class="a" style="left:42px;top:56px;width:9px;height:2px;background:#fff;"></div>
<div class="a" style="left:54px;top:51px;width:12px;height:12px;border:1.3px solid #fff;border-radius:2px;"></div>
<div class="t" style="left:76px;top:47px;width:78px;height:23px;line-height:23px;text-align:left;font-size:12px;color:#fff;font-weight:bold;letter-spacing:-0.35px;">OP_syn.1.1.1</div>
<div class="t" style="left:161px;top:47px;width:295px;height:23px;line-height:23px;text-align:left;font-size:12px;color:#fff;font-weight:bold;letter-spacing:-0.1px;">Земляные работы</div>
<div class="t" style="left:456px;top:47px;width:120px;height:23px;line-height:23px;text-align:center;font-size:12.5px;color:#fff;font-weight:bold;">03.10.2025 09:00</div>
<div class="t" style="left:576px;top:47px;width:127px;height:23px;line-height:23px;text-align:center;font-size:12.5px;color:#fff;font-weight:bold;">13.10.2025 18:00</div>
<div class="t" style="left:0px;top:70.5px;width:21px;height:23px;line-height:23px;text-align:center;font-size:11px;color:#1b1b1d;">4</div>
<div class="a" style="left:22px;top:69px;width:10px;height:23px;background:#17375f;"></div>
<div class="a" style="left:32px;top:69px;width:10px;height:23px;background:#1d4a80;"></div>
<div class="a" style="left:42px;top:69px;width:10px;height:23px;background:#22589c;"></div>
<div class="a" style="left:52px;top:69px;width:651px;height:23px;background:#fff;"></div>
<div class="a" style="left:54px;top:74px;width:12px;height:12px;border:1.3px solid #222;border-radius:2px;background:#fff;"></div>
<div class="t" style="left:76px;top:70px;width:78px;height:23px;line-height:23px;text-align:left;font-size:12px;color:#1b1b1d;">01.01</div>
<div class="t" style="left:161px;top:70px;width:295px;height:23px;line-height:23px;text-align:left;font-size:13px;color:#1b1b1d;">Вертикальная планировка территории</div>
<div class="t" style="left:456px;top:70px;width:120px;height:23px;line-height:23px;text-align:center;font-size:12.5px;color:#1b1b1d;">03.10.2025 09:00</div>
<div class="t" style="left:576px;top:70px;width:127px;height:23px;line-height:23px;text-align:center;font-size:12.5px;color:#1b1b1d;">07.10.2025 18:00</div>
<div class="hl" style="left:52px;top:91px;width:651px;"></div>
<div class="vl" style="left:156px;top:69px;height:23px;"></div>
<div class="vl" style="left:456px;top:69px;height:23px;"></div>
<div class="vl" style="left:576px;top:69px;height:23px;"></div>
<div class="t" style="left:0px;top:93.5px;width:21px;height:23px;line-height:23px;text-align:center;font-size:11px;color:#1b1b1d;">5</div>
<div class="a" style="left:22px;top:92px;width:10px;height:23px;background:#17375f;"></div>
<div class="a" style="left:32px;top:92px;width:10px;height:23px;background:#1d4a80;"></div>
<div class="a" style="left:42px;top:92px;width:10px;height:23px;background:#22589c;"></div>
<div class="a" style="left:52px;top:92px;width:651px;height:23px;background:#fff;"></div>
<div class="a" style="left:54px;top:97px;width:12px;height:12px;border:1.3px solid #222;border-radius:2px;background:#fff;"></div>
<div class="t" style="left:76px;top:93px;width:78px;height:23px;line-height:23px;text-align:left;font-size:12px;color:#1b1b1d;">01.02</div>
<div class="t" style="left:161px;top:93px;width:295px;height:23px;line-height:23px;text-align:left;font-size:13px;color:#1b1b1d;">Устройство котлована</div>
<div class="t" style="left:456px;top:93px;width:120px;height:23px;line-height:23px;text-align:center;font-size:12.5px;color:#1b1b1d;">08.10.2025 09:00</div>
<div class="t" style="left:576px;top:93px;width:127px;height:23px;line-height:23px;text-align:center;font-size:12.5px;color:#1b1b1d;">08.10.2025 18:00</div>
<div class="hl" style="left:52px;top:114px;width:651px;"></div>
<div class="vl" style="left:156px;top:92px;height:23px;"></div>
<div class="vl" style="left:456px;top:92px;height:23px;"></div>
<div class="vl" style="left:576px;top:92px;height:23px;"></div>
<div class="t" style="left:0px;top:116.5px;width:21px;height:23px;line-height:23px;text-align:center;font-size:11px;color:#1b1b1d;">6</div>
<div class="a" style="left:22px;top:115px;width:10px;height:23px;background:#17375f;"></div>
<div class="a" style="left:32px;top:115px;width:10px;height:23px;background:#1d4a80;"></div>
<div class="a" style="left:42px;top:115px;width:10px;height:23px;background:#22589c;"></div>
<div class="a" style="left:52px;top:115px;width:651px;height:23px;background:#fff;"></div>
<div class="a" style="left:54px;top:120px;width:12px;height:12px;border:1.3px solid #222;border-radius:2px;background:#fff;"></div>
<div class="t" style="left:76px;top:116px;width:78px;height:23px;line-height:23px;text-align:left;font-size:12px;color:#1b1b1d;">01.03</div>
<div class="t" style="left:161px;top:116px;width:295px;height:23px;line-height:23px;text-align:left;font-size:13px;color:#1b1b1d;">Устройство песчаного основания</div>
<div class="t" style="left:456px;top:116px;width:120px;height:23px;line-height:23px;text-align:center;font-size:12.5px;color:#1b1b1d;">10.10.2025 09:00</div>
<div class="t" style="left:576px;top:116px;width:127px;height:23px;line-height:23px;text-align:center;font-size:12.5px;color:#1b1b1d;">13.10.2025 18:00</div>
<div class="hl" style="left:52px;top:137px;width:651px;"></div>
<div class="vl" style="left:156px;top:115px;height:23px;"></div>
<div class="vl" style="left:456px;top:115px;height:23px;"></div>
<div class="vl" style="left:576px;top:115px;height:23px;"></div>
<div class="t" style="left:0px;top:139.5px;width:21px;height:23px;line-height:23px;text-align:center;font-size:11px;color:#1b1b1d;">7</div>
<div class="a" style="left:22px;top:138px;width:10px;height:23px;background:#17375f;"></div>
<div class="a" style="left:32px;top:138px;width:10px;height:23px;background:#1d4a80;"></div>
<div class="a" style="left:42px;top:138px;width:661px;height:23px;background:#22589c;"></div>
<div class="a" style="left:42px;top:148px;width:9px;height:2px;background:#fff;"></div>
<div class="a" style="left:54px;top:143px;width:12px;height:12px;border:1.3px solid #fff;border-radius:2px;"></div>
<svg class="ic" style="left:56px;top:145px;width:8px;height:8px" viewBox="0 0 8 8"><path d="M1 4l2 2 4-4.5" fill="none" stroke="#fff" stroke-width="1.1"/></svg>
<div class="t" style="left:76px;top:139px;width:78px;height:23px;line-height:23px;text-align:left;font-size:12px;color:#fff;font-weight:bold;letter-spacing:-0.35px;">OP_syn.1.1.2</div>
<div class="t" style="left:161px;top:139px;width:295px;height:23px;line-height:23px;text-align:left;font-size:12px;color:#fff;font-weight:bold;letter-spacing:-0.1px;">Общестроительные работы</div>
<div class="t" style="left:456px;top:139px;width:120px;height:23px;line-height:23px;text-align:center;font-size:12.5px;color:#fff;font-weight:bold;">14.10.2025 09:00</div>
<div class="t" style="left:576px;top:139px;width:127px;height:23px;line-height:23px;text-align:center;font-size:12.5px;color:#fff;font-weight:bold;">13.03.2026 18:00</div>
<div class="t" style="left:0px;top:162.5px;width:21px;height:23px;line-height:23px;text-align:center;font-size:11px;color:#1b1b1d;">8</div>
<div class="a" style="left:22px;top:161px;width:10px;height:23px;background:#17375f;"></div>
<div class="a" style="left:32px;top:161px;width:10px;height:23px;background:#1d4a80;"></div>
<div class="a" style="left:42px;top:161px;width:10px;height:23px;background:#22589c;"></div>
<div class="a" style="left:52px;top:161px;width:651px;height:23px;background:#2868b4;"></div>
<div class="a" style="left:52px;top:171px;width:9px;height:2px;background:#fff;"></div>
<div class="a" style="left:64px;top:166px;width:12px;height:12px;border:1.3px solid #fff;border-radius:2px;"></div>
<svg class="ic" style="left:66px;top:168px;width:8px;height:8px" viewBox="0 0 8 8"><path d="M1 4l2 2 4-4.5" fill="none" stroke="#fff" stroke-width="1.1"/></svg>
<div class="t" style="left:86px;top:162px;width:68px;height:23px;line-height:23px;text-align:left;font-size:12px;color:#fff;font-weight:bold;letter-spacing:-0.35px;">OP_syn.1....</div>
<div class="t" style="left:161px;top:162px;width:295px;height:23px;line-height:23px;text-align:left;font-size:12px;color:#fff;font-weight:bold;letter-spacing:-0.1px;">Фундамент</div>
<div class="t" style="left:456px;top:162px;width:120px;height:23px;line-height:23px;text-align:center;font-size:12.5px;color:#fff;font-weight:bold;">14.10.2025 09:00</div>
<div class="t" style="left:576px;top:162px;width:127px;height:23px;line-height:23px;text-align:center;font-size:12.5px;color:#fff;font-weight:bold;">30.10.2025 18:00</div>
<div class="t" style="left:0px;top:185.5px;width:21px;height:23px;line-height:23px;text-align:center;font-size:11px;color:#1b1b1d;">9</div>
<div class="a" style="left:22px;top:184px;width:10px;height:23px;background:#17375f;"></div>
<div class="a" style="left:32px;top:184px;width:10px;height:23px;background:#1d4a80;"></div>
<div class="a" style="left:42px;top:184px;width:10px;height:23px;background:#22589c;"></div>
<div class="a" style="left:52px;top:184px;width:10px;height:23px;background:#2868b4;"></div>
<div class="a" style="left:62px;top:184px;width:641px;height:23px;background:#fff;"></div>
<div class="a" style="left:64px;top:189px;width:12px;height:12px;border:1.3px solid #222;border-radius:2px;background:#fff;"></div>
<div class="t" style="left:86px;top:185px;width:68px;height:23px;line-height:23px;text-align:left;font-size:12px;color:#1b1b1d;">02.01.01</div>
<div class="t" style="left:161px;top:185px;width:295px;height:23px;line-height:23px;text-align:left;font-size:13px;color:#1b1b1d;">Устройство буронабивных свай захватка 1</div>
<div class="t" style="left:456px;top:185px;width:120px;height:23px;line-height:23px;text-align:center;font-size:12.5px;color:#1b1b1d;">14.10.2025 09:00</div>
<div class="t" style="left:576px;top:185px;width:127px;height:23px;line-height:23px;text-align:center;font-size:12.5px;color:#1b1b1d;">15.10.2025 18:00</div>
<div class="hl" style="left:62px;top:206px;width:641px;"></div>
<div class="vl" style="left:156px;top:184px;height:23px;"></div>
<div class="vl" style="left:456px;top:184px;height:23px;"></div>
<div class="vl" style="left:576px;top:184px;height:23px;"></div>
<div class="t" style="left:0px;top:208.5px;width:21px;height:23px;line-height:23px;text-align:center;font-size:11px;color:#1b1b1d;">10</div>
<div class="a" style="left:22px;top:207px;width:10px;height:23px;background:#17375f;"></div>
<div class="a" style="left:32px;top:207px;width:10px;height:23px;background:#1d4a80;"></div>
<div class="a" style="left:42px;top:207px;width:10px;height:23px;background:#22589c;"></div>
<div class="a" style="left:52px;top:207px;width:10px;height:23px;background:#2868b4;"></div>
<div class="a" style="left:62px;top:207px;width:641px;height:23px;background:#fff;"></div>
<div class="a" style="left:64px;top:212px;width:12px;height:12px;border:1.3px solid #222;border-radius:2px;background:#fff;"></div>
<div class="t" style="left:86px;top:208px;width:68px;height:23px;line-height:23px;text-align:left;font-size:12px;color:#1b1b1d;">02.01.02</div>
<div class="t" style="left:161px;top:208px;width:295px;height:23px;line-height:23px;text-align:left;font-size:13px;color:#1b1b1d;">Устройство буронабивных свай захватка 2</div>
<div class="t" style="left:456px;top:208px;width:120px;height:23px;line-height:23px;text-align:center;font-size:12.5px;color:#1b1b1d;">16.10.2025 09:00</div>
<div class="t" style="left:576px;top:208px;width:127px;height:23px;line-height:23px;text-align:center;font-size:12.5px;color:#1b1b1d;">17.10.2025 18:00</div>
<div class="hl" style="left:62px;top:229px;width:641px;"></div>
<div class="vl" style="left:156px;top:207px;height:23px;"></div>
<div class="vl" style="left:456px;top:207px;height:23px;"></div>
<div class="vl" style="left:576px;top:207px;height:23px;"></div>
<div class="t" style="left:0px;top:231.5px;width:21px;height:23px;line-height:23px;text-align:center;font-size:11px;color:#1b1b1d;">11</div>
<div class="a" style="left:22px;top:230px;width:10px;height:23px;background:#17375f;"></div>
<div class="a" style="left:32px;top:230px;width:10px;height:23px;background:#1d4a80;"></div>
<div class="a" style="left:42px;top:230px;width:10px;height:23px;background:#22589c;"></div>
<div class="a" style="left:52px;top:230px;width:10px;height:23px;background:#2868b4;"></div>
<div class="a" style="left:62px;top:230px;width:641px;height:23px;background:#dde9f8;"></div>
<div class="a" style="left:64px;top:235px;width:12px;height:12px;background:#111;border-radius:2px;"></div>
<svg class="ic" style="left:66px;top:237px;width:8px;height:8px" viewBox="0 0 8 8"><path d="M1 4l2 2 4-4.5" fill="none" stroke="#fff" stroke-width="1.4"/></svg>
<div class="t" style="left:86px;top:231px;width:68px;height:23px;line-height:23px;text-align:left;font-size:12px;color:#1b1b1d;">02.01.03</div>
<div class="t" style="left:161px;top:231px;width:295px;height:23px;line-height:23px;text-align:left;font-size:13px;color:#1b1b1d;">Устройство буронабивных свай захватка 3</div>
<div class="t" style="left:456px;top:231px;width:120px;height:23px;line-height:23px;text-align:center;font-size:12.5px;color:#1b1b1d;">20.10.2025 09:00</div>
<div class="t" style="left:576px;top:231px;width:127px;height:23px;line-height:23px;text-align:center;font-size:12.5px;color:#1b1b1d;">21.10.2025 18:00</div>
<div class="hl" style="left:62px;top:252px;width:641px;"></div>
<div class="vl" style="left:156px;top:230px;height:23px;"></div>
<div class="vl" style="left:456px;top:230px;height:23px;"></div>
<div class="vl" style="left:576px;top:230px;height:23px;"></div>
<div class="t" style="left:0px;top:254.5px;width:21px;height:23px;line-height:23px;text-align:center;font-size:11px;color:#1b1b1d;">12</div>
<div class="a" style="left:22px;top:253px;width:10px;height:23px;background:#17375f;"></div>
<div class="a" style="left:32px;top:253px;width:10px;height:23px;background:#1d4a80;"></div>
<div class="a" style="left:42px;top:253px;width:10px;height:23px;background:#22589c;"></div>
<div class="a" style="left:52px;top:253px;width:10px;height:23px;background:#2868b4;"></div>
<div class="a" style="left:62px;top:253px;width:641px;height:23px;background:#fff;"></div>
<div class="a" style="left:64px;top:258px;width:12px;height:12px;border:1.3px solid #222;border-radius:2px;background:#fff;"></div>
<div class="t" style="left:86px;top:254px;width:68px;height:23px;line-height:23px;text-align:left;font-size:12px;color:#1b1b1d;">02.01.04</div>
<div class="t" style="left:161px;top:254px;width:295px;height:23px;line-height:23px;text-align:left;font-size:13px;color:#1b1b1d;">Устройство буронабивных свай захватка 4</div>
<div class="t" style="left:456px;top:254px;width:120px;height:23px;line-height:23px;text-align:center;font-size:12.5px;color:#1b1b1d;">22.10.2025 09:00</div>
<div class="t" style="left:576px;top:254px;width:127px;height:23px;line-height:23px;text-align:center;font-size:12.5px;color:#1b1b1d;">23.10.2025 18:00</div>
<div class="hl" style="left:62px;top:275px;width:641px;"></div>
<div class="vl" style="left:156px;top:253px;height:23px;"></div>
<div class="vl" style="left:456px;top:253px;height:23px;"></div>
<div class="vl" style="left:576px;top:253px;height:23px;"></div>
<div class="t" style="left:0px;top:277.5px;width:21px;height:23px;line-height:23px;text-align:center;font-size:11px;color:#1b1b1d;">13</div>
<div class="a" style="left:22px;top:276px;width:10px;height:23px;background:#17375f;"></div>
<div class="a" style="left:32px;top:276px;width:10px;height:23px;background:#1d4a80;"></div>
<div class="a" style="left:42px;top:276px;width:10px;height:23px;background:#22589c;"></div>
<div class="a" style="left:52px;top:276px;width:10px;height:23px;background:#2868b4;"></div>
<div class="a" style="left:62px;top:276px;width:641px;height:23px;background:#fff;"></div>
<div class="a" style="left:64px;top:281px;width:12px;height:12px;border:1.3px solid #222;border-radius:2px;background:#fff;"></div>
<div class="t" style="left:86px;top:277px;width:68px;height:23px;line-height:23px;text-align:left;font-size:12px;color:#1b1b1d;">02.01.05</div>
<div class="t" style="left:161px;top:277px;width:295px;height:23px;line-height:23px;text-align:left;font-size:13px;color:#1b1b1d;">Устройство фундаментной плиты</div>
<div class="t" style="left:456px;top:277px;width:120px;height:23px;line-height:23px;text-align:center;font-size:12.5px;color:#1b1b1d;">24.10.2025 09:00</div>
<div class="t" style="left:576px;top:277px;width:127px;height:23px;line-height:23px;text-align:center;font-size:12.5px;color:#1b1b1d;">30.10.2025 18:00</div>
<div class="hl" style="left:62px;top:298px;width:641px;"></div>
<div class="vl" style="left:156px;top:276px;height:23px;"></div>
<div class="vl" style="left:456px;top:276px;height:23px;"></div>
<div class="vl" style="left:576px;top:276px;height:23px;"></div>
<div class="t" style="left:0px;top:300.5px;width:21px;height:23px;line-height:23px;text-align:center;font-size:11px;color:#1b1b1d;">14</div>
<div class="a" style="left:22px;top:299px;width:10px;height:23px;background:#17375f;"></div>
<div class="a" style="left:32px;top:299px;width:10px;height:23px;background:#1d4a80;"></div>
<div class="a" style="left:42px;top:299px;width:10px;height:23px;background:#22589c;"></div>
<div class="a" style="left:52px;top:299px;width:651px;height:23px;background:#2868b4;"></div>
<div class="a" style="left:52px;top:309px;width:9px;height:2px;background:#fff;"></div>
<div class="a" style="left:64px;top:304px;width:12px;height:12px;border:1.3px solid #fff;border-radius:2px;"></div>
<div class="t" style="left:86px;top:300px;width:68px;height:23px;line-height:23px;text-align:left;font-size:12px;color:#fff;font-weight:bold;letter-spacing:-0.35px;">OP_syn.1....</div>
<div class="t" style="left:161px;top:300px;width:295px;height:23px;line-height:23px;text-align:left;font-size:12px;color:#fff;font-weight:bold;letter-spacing:-0.1px;">Монолитные работы подземной части</div>
<div class="t" style="left:456px;top:300px;width:120px;height:23px;line-height:23px;text-align:center;font-size:12.5px;color:#fff;font-weight:bold;">31.10.2025 09:00</div>
<div class="t" style="left:576px;top:300px;width:127px;height:23px;line-height:23px;text-align:center;font-size:12.5px;color:#fff;font-weight:bold;">17.11.2025 18:00</div>
<div class="t" style="left:0px;top:323.5px;width:21px;height:23px;line-height:23px;text-align:center;font-size:11px;color:#1b1b1d;">15</div>
<div class="a" style="left:22px;top:322px;width:10px;height:23px;background:#17375f;"></div>
<div class="a" style="left:32px;top:322px;width:10px;height:23px;background:#1d4a80;"></div>
<div class="a" style="left:42px;top:322px;width:10px;height:23px;background:#22589c;"></div>
<div class="a" style="left:52px;top:322px;width:10px;height:23px;background:#2868b4;"></div>
<div class="a" style="left:62px;top:322px;width:641px;height:23px;background:#fff;"></div>
<div class="a" style="left:64px;top:327px;width:12px;height:12px;border:1.3px solid #222;border-radius:2px;background:#fff;"></div>
<div class="t" style="left:86px;top:323px;width:68px;height:23px;line-height:23px;text-align:left;font-size:12px;color:#1b1b1d;">02.02.01</div>
<div class="t" style="left:161px;top:323px;width:295px;height:23px;line-height:23px;text-align:left;font-size:13px;color:#1b1b1d;">Устройство монолитных стен цокольного этажа</div>
<div class="t" style="left:456px;top:323px;width:120px;height:23px;line-height:23px;text-align:center;font-size:12.5px;color:#1b1b1d;">31.10.2025 09:00</div>
<div class="t" style="left:576px;top:323px;width:127px;height:23px;line-height:23px;text-align:center;font-size:12.5px;color:#1b1b1d;">03.11.2025 18:00</div>
<div class="hl" style="left:62px;top:344px;width:641px;"></div>
<div class="vl" style="left:156px;top:322px;height:23px;"></div>
<div class="vl" style="left:456px;top:322px;height:23px;"></div>
<div class="vl" style="left:576px;top:322px;height:23px;"></div>
<div class="t" style="left:0px;top:346.5px;width:21px;height:23px;line-height:23px;text-align:center;font-size:11px;color:#1b1b1d;">16</div>
<div class="a" style="left:22px;top:345px;width:10px;height:23px;background:#17375f;"></div>
<div class="a" style="left:32px;top:345px;width:10px;height:23px;background:#1d4a80;"></div>
<div class="a" style="left:42px;top:345px;width:10px;height:23px;background:#22589c;"></div>
<div class="a" style="left:52px;top:345px;width:10px;height:23px;background:#2868b4;"></div>
<div class="a" style="left:62px;top:345px;width:641px;height:23px;background:#fff;"></div>
<div class="a" style="left:64px;top:350px;width:12px;height:12px;border:1.3px solid #222;border-radius:2px;background:#fff;"></div>
<div class="t" style="left:86px;top:346px;width:68px;height:23px;line-height:23px;text-align:left;font-size:12px;color:#1b1b1d;">02.02.02</div>
<div class="t" style="left:161px;top:346px;width:295px;height:23px;line-height:23px;text-align:left;font-size:13px;color:#1b1b1d;">Устройство монолитного перекрытия...</div>
<div class="t" style="left:456px;top:346px;width:120px;height:23px;line-height:23px;text-align:center;font-size:12.5px;color:#1b1b1d;">05.11.2025 09:00</div>
<div class="t" style="left:576px;top:346px;width:127px;height:23px;line-height:23px;text-align:center;font-size:12.5px;color:#1b1b1d;">11.11.2025 18:00</div>
<div class="hl" style="left:62px;top:367px;width:641px;"></div>
<div class="vl" style="left:156px;top:345px;height:23px;"></div>
<div class="vl" style="left:456px;top:345px;height:23px;"></div>
<div class="vl" style="left:576px;top:345px;height:23px;"></div>
<div class="t" style="left:0px;top:369.5px;width:21px;height:23px;line-height:23px;text-align:center;font-size:11px;color:#1b1b1d;">17</div>
<div class="a" style="left:22px;top:368px;width:10px;height:23px;background:#17375f;"></div>
<div class="a" style="left:32px;top:368px;width:10px;height:23px;background:#1d4a80;"></div>
<div class="a" style="left:42px;top:368px;width:10px;height:23px;background:#22589c;"></div>
<div class="a" style="left:52px;top:368px;width:10px;height:23px;background:#2868b4;"></div>
<div class="a" style="left:62px;top:368px;width:641px;height:23px;background:#fff;"></div>
<div class="a" style="left:64px;top:373px;width:12px;height:12px;border:1.3px solid #222;border-radius:2px;background:#fff;"></div>
<div class="t" style="left:86px;top:369px;width:68px;height:23px;line-height:23px;text-align:left;font-size:12px;color:#1b1b1d;">02.02.03</div>
<div class="t" style="left:161px;top:369px;width:295px;height:23px;line-height:23px;text-align:left;font-size:13px;color:#1b1b1d;">Устройство монолитной входной лестницы</div>
<div class="t" style="left:456px;top:369px;width:120px;height:23px;line-height:23px;text-align:center;font-size:12.5px;color:#1b1b1d;">14.11.2025 09:00</div>
<div class="t" style="left:576px;top:369px;width:127px;height:23px;line-height:23px;text-align:center;font-size:12.5px;color:#1b1b1d;">17.11.2025 18:00</div>
<div class="hl" style="left:62px;top:390px;width:641px;"></div>
<div class="vl" style="left:156px;top:368px;height:23px;"></div>
<div class="vl" style="left:456px;top:368px;height:23px;"></div>
<div class="vl" style="left:576px;top:368px;height:23px;"></div>
<div class="t" style="left:0px;top:392.5px;width:21px;height:23px;line-height:23px;text-align:center;font-size:11px;color:#1b1b1d;">18</div>
<div class="a" style="left:22px;top:391px;width:10px;height:23px;background:#17375f;"></div>
<div class="a" style="left:32px;top:391px;width:10px;height:23px;background:#1d4a80;"></div>
<div class="a" style="left:42px;top:391px;width:10px;height:23px;background:#22589c;"></div>
<div class="a" style="left:52px;top:391px;width:651px;height:23px;background:#2868b4;"></div>
<div class="a" style="left:52px;top:401px;width:9px;height:2px;background:#fff;"></div>
<div class="a" style="left:64px;top:396px;width:12px;height:12px;border:1.3px solid #fff;border-radius:2px;"></div>
<div class="t" style="left:86px;top:392px;width:68px;height:23px;line-height:23px;text-align:left;font-size:12px;color:#fff;font-weight:bold;letter-spacing:-0.35px;">OP_syn.1....</div>
<div class="t" style="left:161px;top:392px;width:295px;height:23px;line-height:23px;text-align:left;font-size:12px;color:#fff;font-weight:bold;letter-spacing:-0.1px;">Монолитные работы надземной части</div>
<div class="t" style="left:456px;top:392px;width:120px;height:23px;line-height:23px;text-align:center;font-size:12.5px;color:#fff;font-weight:bold;">12.11.2025 09:00</div>
<div class="t" style="left:576px;top:392px;width:127px;height:23px;line-height:23px;text-align:center;font-size:12.5px;color:#fff;font-weight:bold;">24.12.2025 18:00</div>
<div class="t" style="left:0px;top:415.5px;width:21px;height:23px;line-height:23px;text-align:center;font-size:11px;color:#1b1b1d;">19</div>
<div class="a" style="left:22px;top:414px;width:10px;height:23px;background:#17375f;"></div>
<div class="a" style="left:32px;top:414px;width:10px;height:23px;background:#1d4a80;"></div>
<div class="a" style="left:42px;top:414px;width:10px;height:23px;background:#22589c;"></div>
<div class="a" style="left:52px;top:414px;width:10px;height:23px;background:#2868b4;"></div>
<div class="a" style="left:62px;top:414px;width:641px;height:23px;background:#fff;"></div>
<div class="a" style="left:64px;top:419px;width:12px;height:12px;border:1.3px solid #222;border-radius:2px;background:#fff;"></div>
<div class="t" style="left:86px;top:415px;width:68px;height:23px;line-height:23px;text-align:left;font-size:12px;color:#1b1b1d;">02.03.01</div>
<div class="t" style="left:161px;top:415px;width:295px;height:23px;line-height:23px;text-align:left;font-size:13px;color:#1b1b1d;">Устройство наружных монолитных стен 1-го...</div>
<div class="t" style="left:456px;top:415px;width:120px;height:23px;line-height:23px;text-align:center;font-size:12.5px;color:#1b1b1d;">12.11.2025 09:00</div>
<div class="t" style="left:576px;top:415px;width:127px;height:23px;line-height:23px;text-align:center;font-size:12.5px;color:#1b1b1d;">13.11.2025 18:00</div>
<div class="hl" style="left:62px;top:436px;width:641px;"></div>
<div class="vl" style="left:156px;top:414px;height:23px;"></div>
<div class="vl" style="left:456px;top:414px;height:23px;"></div>
<div class="vl" style="left:576px;top:414px;height:23px;"></div>
<div class="t" style="left:0px;top:438.5px;width:21px;height:23px;line-height:23px;text-align:center;font-size:11px;color:#1b1b1d;">20</div>
<div class="a" style="left:22px;top:437px;width:10px;height:23px;background:#17375f;"></div>
<div class="a" style="left:32px;top:437px;width:10px;height:23px;background:#1d4a80;"></div>
<div class="a" style="left:42px;top:437px;width:10px;height:23px;background:#22589c;"></div>
<div class="a" style="left:52px;top:437px;width:10px;height:23px;background:#2868b4;"></div>
<div class="a" style="left:62px;top:437px;width:641px;height:23px;background:#fff;"></div>
<div class="a" style="left:64px;top:442px;width:12px;height:12px;border:1.3px solid #222;border-radius:2px;background:#fff;"></div>
<div class="t" style="left:86px;top:438px;width:68px;height:23px;line-height:23px;text-align:left;font-size:12px;color:#1b1b1d;">02.03.02</div>
<div class="t" style="left:161px;top:438px;width:295px;height:23px;line-height:23px;text-align:left;font-size:13px;color:#1b1b1d;">Устройство внутренних монолитных стен 1-го...</div>
<div class="t" style="left:456px;top:438px;width:120px;height:23px;line-height:23px;text-align:center;font-size:12.5px;color:#1b1b1d;">14.11.2025 09:00</div>
<div class="t" style="left:576px;top:438px;width:127px;height:23px;line-height:23px;text-align:center;font-size:12.5px;color:#1b1b1d;">17.11.2025 18:00</div>
<div class="hl" style="left:62px;top:459px;width:641px;"></div>
<div class="vl" style="left:156px;top:437px;height:23px;"></div>
<div class="vl" style="left:456px;top:437px;height:23px;"></div>
<div class="vl" style="left:576px;top:437px;height:23px;"></div>
</div>
<div class="a" style="left:748px;top:140px;width:13px;height:449px;background:#f3f3f5;"></div>
<div class="a" style="left:45px;top:589px;width:716px;height:12px;background:#f3f3f5;"></div>
<div class="a" style="left:45px;top:590px;width:625px;height:11px;background:#dcdcde;border-radius:6px;"></div>
<div class="a" style="left:767px;top:90px;width:1143px;height:499px;background:#fff;"></div>
<div class="a" style="left:767px;top:139px;width:1143px;height:1px;background:#c9c9cd;"></div>
<div class="a" style="left:1656px;top:114px;width:254px;height:1px;background:#c9c9cd;"></div>
<div class="t" style="left:1656px;top:115.5px;width:13px;height:24px;line-height:24px;text-align:left;font-size:12px;">Согл.план</div>
<div class="a" style="left:1669px;top:90px;width:1px;height:49px;background:#b9b9bd;"></div>
<div class="t" style="left:1669px;top:91px;width:241px;height:24px;line-height:24px;text-align:center;font-size:12px;">Суммарно</div>
<svg class="ic" style="left:1688px;top:95px;width:12px;height:17px" viewBox="0 0 12 17" fill="none" stroke="#1b1b1d" stroke-width="1.5" stroke-linecap="round" stroke-linejoin="round"><path d="M11 1L1 8.5 11 16"/></svg>
<svg class="ic" style="left:1880px;top:95px;width:12px;height:17px" viewBox="0 0 12 17" fill="none" stroke="#1b1b1d" stroke-width="1.5" stroke-linecap="round" stroke-linejoin="round"><path d="M1 1l10 7.5L1 16"/></svg>
<div class="t" style="left:1669px;top:116.5px;width:80px;height:24px;line-height:24px;text-align:center;font-size:12px;">Согл.план</div>
<div class="t" style="left:1749px;top:116.5px;width:80px;height:24px;line-height:24px;text-align:center;font-size:12px;">Опер.план</div>
<div class="vl" style="left:1749px;top:115px;height:24px;"></div>
<div class="t" style="left:1829px;top:116.5px;width:80px;height:24px;line-height:24px;text-align:center;font-size:12px;">Факт</div>
<div class="vl" style="left:1829px;top:115px;height:24px;"></div>
<div class="a" style="left:767px;top:140px;width:1143px;height:449px;overflow:hidden;">
<div class="a" style="left:0px;top:0px;width:1143px;height:23px;background:#17375f;"></div>
<div class="a" style="left:902px;top:0px;width:1px;height:23px;background:#b9b9bd;"></div>
<div class="t" style="left:903px;top:-1.5px;width:80px;height:23px;line-height:23px;text-align:center;font-size:12px;color:#fff;">970</div>
<div class="t" style="left:983px;top:-1.5px;width:80px;height:23px;line-height:23px;text-align:center;font-size:12px;color:#fff;">970</div>
<div class="t" style="left:1063px;top:-1.5px;width:80px;height:23px;line-height:23px;text-align:center;font-size:12px;color:#fff;">970</div>
<div class="a" style="left:0px;top:23px;width:1143px;height:23px;background:#1d4a80;"></div>
<div class="a" style="left:902px;top:23px;width:1px;height:23px;background:#b9b9bd;"></div>
<div class="t" style="left:903px;top:21.5px;width:80px;height:23px;line-height:23px;text-align:center;font-size:12px;color:#fff;">970</div>
<div class="t" style="left:983px;top:21.5px;width:80px;height:23px;line-height:23px;text-align:center;font-size:12px;color:#fff;">970</div>
<div class="t" style="left:1063px;top:21.5px;width:80px;height:23px;line-height:23px;text-align:center;font-size:12px;color:#fff;">970</div>
<div class="a" style="left:0px;top:46px;width:1143px;height:23px;background:#22589c;"></div>
<div class="a" style="left:902px;top:46px;width:1px;height:23px;background:#b9b9bd;"></div>
<div class="t" style="left:903px;top:44.5px;width:80px;height:23px;line-height:23px;text-align:center;font-size:12px;color:#fff;">250</div>
<div class="t" style="left:983px;top:44.5px;width:80px;height:23px;line-height:23px;text-align:center;font-size:12px;color:#fff;">250</div>
<div class="t" style="left:1063px;top:44.5px;width:80px;height:23px;line-height:23px;text-align:center;font-size:12px;color:#fff;">250</div>
<div class="a" style="left:0px;top:69px;width:902px;height:23px;background:#fff;"></div>
<div class="a" style="left:902px;top:69px;width:241px;height:23px;background:#f0f0f2;"></div>
<div class="hl" style="left:0px;top:91px;width:1143px;"></div>
<div class="a" style="left:60px;top:69px;width:1px;height:23px;background:#b9b9bd;"></div>
<div class="vl" style="left:150px;top:69px;height:23px;"></div>
<div class="vl" style="left:240px;top:69px;height:23px;"></div>
<div class="a" style="left:330px;top:69px;width:1px;height:23px;background:#b9b9bd;"></div>
<div class="vl" style="left:420px;top:69px;height:23px;"></div>
<div class="vl" style="left:510px;top:69px;height:23px;"></div>
<div class="a" style="left:600px;top:69px;width:1px;height:23px;background:#b9b9bd;"></div>
<div class="vl" style="left:690px;top:69px;height:23px;"></div>
<div class="vl" style="left:780px;top:69px;height:23px;"></div>
<div class="a" style="left:870px;top:69px;width:1px;height:23px;background:#b9b9bd;"></div>
<div class="vl" style="left:982px;top:69px;height:23px;"></div>
<div class="vl" style="left:1062px;top:69px;height:23px;"></div>
<div class="a" style="left:902px;top:69px;width:1px;height:23px;background:#b9b9bd;"></div>
<div class="t" style="left:903px;top:67.5px;width:80px;height:23px;line-height:23px;text-align:center;font-size:12px;color:#1b1b1d;">250</div>
<div class="t" style="left:983px;top:67.5px;width:80px;height:23px;line-height:23px;text-align:center;font-size:12px;color:#1b1b1d;">250</div>
<div class="t" style="left:1063px;top:67.5px;width:80px;height:23px;line-height:23px;text-align:center;font-size:12px;color:#1b1b1d;">250</div>
<div class="a" style="left:0px;top:92px;width:902px;height:23px;background:#fff;"></div>
<div class="a" style="left:902px;top:92px;width:241px;height:23px;background:#f0f0f2;"></div>
<div class="hl" style="left:0px;top:114px;width:1143px;"></div>
<div class="a" style="left:60px;top:92px;width:1px;height:23px;background:#b9b9bd;"></div>
<div class="vl" style="left:150px;top:92px;height:23px;"></div>
<div class="vl" style="left:240px;top:92px;height:23px;"></div>
<div class="a" style="left:330px;top:92px;width:1px;height:23px;background:#b9b9bd;"></div>
<div class="vl" style="left:420px;top:92px;height:23px;"></div>
<div class="vl" style="left:510px;top:92px;height:23px;"></div>
<div class="a" style="left:600px;top:92px;width:1px;height:23px;background:#b9b9bd;"></div>
<div class="vl" style="left:690px;top:92px;height:23px;"></div>
<div class="vl" style="left:780px;top:92px;height:23px;"></div>
<div class="a" style="left:870px;top:92px;width:1px;height:23px;background:#b9b9bd;"></div>
<div class="vl" style="left:982px;top:92px;height:23px;"></div>
<div class="vl" style="left:1062px;top:92px;height:23px;"></div>
<div class="a" style="left:902px;top:92px;width:1px;height:23px;background:#b9b9bd;"></div>
<div class="a" style="left:0px;top:115px;width:902px;height:23px;background:#fff;"></div>
<div class="a" style="left:902px;top:115px;width:241px;height:23px;background:#f0f0f2;"></div>
<div class="hl" style="left:0px;top:137px;width:1143px;"></div>
<div class="a" style="left:60px;top:115px;width:1px;height:23px;background:#b9b9bd;"></div>
<div class="vl" style="left:150px;top:115px;height:23px;"></div>
<div class="vl" style="left:240px;top:115px;height:23px;"></div>
<div class="a" style="left:330px;top:115px;width:1px;height:23px;background:#b9b9bd;"></div>
<div class="vl" style="left:420px;top:115px;height:23px;"></div>
<div class="vl" style="left:510px;top:115px;height:23px;"></div>
<div class="a" style="left:600px;top:115px;width:1px;height:23px;background:#b9b9bd;"></div>
<div class="vl" style="left:690px;top:115px;height:23px;"></div>
<div class="vl" style="left:780px;top:115px;height:23px;"></div>
<div class="a" style="left:870px;top:115px;width:1px;height:23px;background:#b9b9bd;"></div>
<div class="vl" style="left:982px;top:115px;height:23px;"></div>
<div class="vl" style="left:1062px;top:115px;height:23px;"></div>
<div class="a" style="left:902px;top:115px;width:1px;height:23px;background:#b9b9bd;"></div>
<div class="a" style="left:0px;top:138px;width:1143px;height:23px;background:#22589c;"></div>
<div class="a" style="left:902px;top:138px;width:1px;height:23px;background:#b9b9bd;"></div>
<div class="t" style="left:903px;top:136.5px;width:80px;height:23px;line-height:23px;text-align:center;font-size:12px;color:#fff;">720</div>
<div class="t" style="left:983px;top:136.5px;width:80px;height:23px;line-height:23px;text-align:center;font-size:12px;color:#fff;">720</div>
<div class="t" style="left:1063px;top:136.5px;width:80px;height:23px;line-height:23px;text-align:center;font-size:12px;color:#fff;">720</div>
<div class="t" style="left:600px;top:137px;width:90px;height:23px;line-height:23px;text-align:center;font-size:12px;color:#fff;">8</div>
<div class="t" style="left:690px;top:137px;width:90px;height:23px;line-height:23px;text-align:center;font-size:12px;color:#fff;">8</div>
<div class="t" style="left:780px;top:137px;width:90px;height:23px;line-height:23px;text-align:center;font-size:12px;color:#5cc27a;">8</div>
<div class="a" style="left:0px;top:161px;width:1143px;height:23px;background:#2868b4;"></div>
<div class="a" style="left:902px;top:161px;width:1px;height:23px;background:#b9b9bd;"></div>
<div class="t" style="left:903px;top:159.5px;width:80px;height:23px;line-height:23px;text-align:center;font-size:12px;color:#fff;">200</div>
<div class="t" style="left:983px;top:159.5px;width:80px;height:23px;line-height:23px;text-align:center;font-size:12px;color:#fff;">200</div>
<div class="t" style="left:1063px;top:159.5px;width:80px;height:23px;line-height:23px;text-align:center;font-size:12px;color:#fff;">200</div>
<div class="t" style="left:510px;top:160px;width:90px;height:23px;line-height:23px;text-align:center;font-size:12px;color:#5cc27a;">8</div>
<div class="t" style="left:600px;top:160px;width:90px;height:23px;line-height:23px;text-align:center;font-size:12px;color:#fff;">8</div>
<div class="t" style="left:690px;top:160px;width:90px;height:23px;line-height:23px;text-align:center;font-size:12px;color:#fff;">8</div>
<div class="t" style="left:780px;top:160px;width:90px;height:23px;line-height:23px;text-align:center;font-size:12px;color:#5cc27a;">8</div>
<div class="a" style="left:0px;top:184px;width:902px;height:23px;background:#fff;"></div>
<div class="a" style="left:902px;top:184px;width:241px;height:23px;background:#f0f0f2;"></div>
<div class="hl" style="left:0px;top:206px;width:1143px;"></div>
<div class="a" style="left:60px;top:184px;width:1px;height:23px;background:#b9b9bd;"></div>
<div class="vl" style="left:150px;top:184px;height:23px;"></div>
<div class="vl" style="left:240px;top:184px;height:23px;"></div>
<div class="a" style="left:330px;top:184px;width:1px;height:23px;background:#b9b9bd;"></div>
<div class="vl" style="left:420px;top:184px;height:23px;"></div>
<div class="vl" style="left:510px;top:184px;height:23px;"></div>
<div class="a" style="left:600px;top:184px;width:1px;height:23px;background:#b9b9bd;"></div>
<div class="vl" style="left:690px;top:184px;height:23px;"></div>
<div class="vl" style="left:780px;top:184px;height:23px;"></div>
<div class="a" style="left:870px;top:184px;width:1px;height:23px;background:#b9b9bd;"></div>
<div class="vl" style="left:982px;top:184px;height:23px;"></div>
<div class="vl" style="left:1062px;top:184px;height:23px;"></div>
<div class="a" style="left:902px;top:184px;width:1px;height:23px;background:#b9b9bd;"></div>
<div class="t" style="left:903px;top:182.5px;width:80px;height:23px;line-height:23px;text-align:center;font-size:12px;color:#1b1b1d;">40</div>
<div class="t" style="left:983px;top:182.5px;width:80px;height:23px;line-height:23px;text-align:center;font-size:12px;color:#1b1b1d;">40</div>
<div class="t" style="left:1063px;top:182.5px;width:80px;height:23px;line-height:23px;text-align:center;font-size:12px;color:#1b1b1d;">40</div>
<div class="a" style="left:0px;top:207px;width:902px;height:23px;background:#fff;"></div>
<div class="a" style="left:902px;top:207px;width:241px;height:23px;background:#f0f0f2;"></div>
<div class="hl" style="left:0px;top:229px;width:1143px;"></div>
<div class="a" style="left:60px;top:207px;width:1px;height:23px;background:#b9b9bd;"></div>
<div class="vl" style="left:150px;top:207px;height:23px;"></div>
<div class="vl" style="left:240px;top:207px;height:23px;"></div>
<div class="a" style="left:330px;top:207px;width:1px;height:23px;background:#b9b9bd;"></div>
<div class="vl" style="left:420px;top:207px;height:23px;"></div>
<div class="vl" style="left:510px;top:207px;height:23px;"></div>
<div class="a" style="left:600px;top:207px;width:1px;height:23px;background:#b9b9bd;"></div>
<div class="vl" style="left:690px;top:207px;height:23px;"></div>
<div class="vl" style="left:780px;top:207px;height:23px;"></div>
<div class="a" style="left:870px;top:207px;width:1px;height:23px;background:#b9b9bd;"></div>
<div class="vl" style="left:982px;top:207px;height:23px;"></div>
<div class="vl" style="left:1062px;top:207px;height:23px;"></div>
<div class="a" style="left:902px;top:207px;width:1px;height:23px;background:#b9b9bd;"></div>
<div class="t" style="left:903px;top:205.5px;width:80px;height:23px;line-height:23px;text-align:center;font-size:12px;color:#1b1b1d;">40</div>
<div class="t" style="left:983px;top:205.5px;width:80px;height:23px;line-height:23px;text-align:center;font-size:12px;color:#1b1b1d;">40</div>
<div class="t" style="left:1063px;top:205.5px;width:80px;height:23px;line-height:23px;text-align:center;font-size:12px;color:#1b1b1d;">40</div>
<div class="a" style="left:0px;top:230px;width:902px;height:23px;background:#dde9f8;"></div>
<div class="a" style="left:902px;top:230px;width:241px;height:23px;background:#dde9f8;"></div>
<div class="hl" style="left:0px;top:252px;width:1143px;"></div>
<div class="a" style="left:60px;top:230px;width:1px;height:23px;background:#b9b9bd;"></div>
<div class="vl" style="left:150px;top:230px;height:23px;"></div>
<div class="vl" style="left:240px;top:230px;height:23px;"></div>
<div class="a" style="left:330px;top:230px;width:1px;height:23px;background:#b9b9bd;"></div>
<div class="vl" style="left:420px;top:230px;height:23px;"></div>
<div class="vl" style="left:510px;top:230px;height:23px;"></div>
<div class="a" style="left:600px;top:230px;width:1px;height:23px;background:#b9b9bd;"></div>
<div class="vl" style="left:690px;top:230px;height:23px;"></div>
<div class="vl" style="left:780px;top:230px;height:23px;"></div>
<div class="a" style="left:870px;top:230px;width:1px;height:23px;background:#b9b9bd;"></div>
<div class="vl" style="left:982px;top:230px;height:23px;"></div>
<div class="vl" style="left:1062px;top:230px;height:23px;"></div>
<div class="a" style="left:902px;top:230px;width:1px;height:23px;background:#b9b9bd;"></div>
<div class="t" style="left:903px;top:228.5px;width:80px;height:23px;line-height:23px;text-align:center;font-size:12px;color:#1b1b1d;">40</div>
<div class="t" style="left:983px;top:228.5px;width:80px;height:23px;line-height:23px;text-align:center;font-size:12px;color:#1b1b1d;">40</div>
<div class="t" style="left:1063px;top:228.5px;width:80px;height:23px;line-height:23px;text-align:center;font-size:12px;color:#1b1b1d;">40</div>
<div class="a" style="left:0px;top:253px;width:902px;height:23px;background:#fff;"></div>
<div class="a" style="left:902px;top:253px;width:241px;height:23px;background:#f0f0f2;"></div>
<div class="hl" style="left:0px;top:275px;width:1143px;"></div>
<div class="a" style="left:60px;top:253px;width:1px;height:23px;background:#b9b9bd;"></div>
<div class="vl" style="left:150px;top:253px;height:23px;"></div>
<div class="vl" style="left:240px;top:253px;height:23px;"></div>
<div class="a" style="left:330px;top:253px;width:1px;height:23px;background:#b9b9bd;"></div>
<div class="vl" style="left:420px;top:253px;height:23px;"></div>
<div class="vl" style="left:510px;top:253px;height:23px;"></div>
<div class="a" style="left:600px;top:253px;width:1px;height:23px;background:#b9b9bd;"></div>
<div class="vl" style="left:690px;top:253px;height:23px;"></div>
<div class="vl" style="left:780px;top:253px;height:23px;"></div>
<div class="a" style="left:870px;top:253px;width:1px;height:23px;background:#b9b9bd;"></div>
<div class="vl" style="left:982px;top:253px;height:23px;"></div>
<div class="vl" style="left:1062px;top:253px;height:23px;"></div>
<div class="a" style="left:902px;top:253px;width:1px;height:23px;background:#b9b9bd;"></div>
<div class="t" style="left:903px;top:251.5px;width:80px;height:23px;line-height:23px;text-align:center;font-size:12px;color:#1b1b1d;">40</div>
<div class="t" style="left:983px;top:251.5px;width:80px;height:23px;line-height:23px;text-align:center;font-size:12px;color:#1b1b1d;">40</div>
<div class="t" style="left:1063px;top:251.5px;width:80px;height:23px;line-height:23px;text-align:center;font-size:12px;color:#1b1b1d;">40</div>
<div class="a" style="left:0px;top:276px;width:902px;height:23px;background:#fff;"></div>
<div class="a" style="left:902px;top:276px;width:241px;height:23px;background:#f0f0f2;"></div>
<div class="hl" style="left:0px;top:298px;width:1143px;"></div>
<div class="a" style="left:60px;top:276px;width:1px;height:23px;background:#b9b9bd;"></div>
<div class="vl" style="left:150px;top:276px;height:23px;"></div>
<div class="vl" style="left:240px;top:276px;height:23px;"></div>
<div class="a" style="left:330px;top:276px;width:1px;height:23px;background:#b9b9bd;"></div>
<div class="vl" style="left:420px;top:276px;height:23px;"></div>
<div class="vl" style="left:510px;top:276px;height:23px;"></div>
<div class="a" style="left:600px;top:276px;width:1px;height:23px;background:#b9b9bd;"></div>
<div class="vl" style="left:690px;top:276px;height:23px;"></div>
<div class="vl" style="left:780px;top:276px;height:23px;"></div>
<div class="a" style="left:870px;top:276px;width:1px;height:23px;background:#b9b9bd;"></div>
<div class="vl" style="left:982px;top:276px;height:23px;"></div>
<div class="vl" style="left:1062px;top:276px;height:23px;"></div>
<div class="a" style="left:902px;top:276px;width:1px;height:23px;background:#b9b9bd;"></div>
<div class="t" style="left:903px;top:274.5px;width:80px;height:23px;line-height:23px;text-align:center;font-size:12px;color:#1b1b1d;">40</div>
<div class="t" style="left:983px;top:274.5px;width:80px;height:23px;line-height:23px;text-align:center;font-size:12px;color:#1b1b1d;">40</div>
<div class="t" style="left:1063px;top:274.5px;width:80px;height:23px;line-height:23px;text-align:center;font-size:12px;color:#1b1b1d;">40</div>
<div class="t" style="left:510px;top:275px;width:90px;height:23px;line-height:23px;text-align:center;font-size:12px;color:#5cc27a;">8</div>
<div class="t" style="left:600px;top:275px;width:90px;height:23px;line-height:23px;text-align:center;font-size:12px;color:#1b1b1d;">8</div>
<div class="t" style="left:690px;top:275px;width:90px;height:23px;line-height:23px;text-align:center;font-size:12px;color:#777;">8</div>
<div class="t" style="left:780px;top:275px;width:90px;height:23px;line-height:23px;text-align:center;font-size:12px;color:#5cc27a;">8</div>
<div class="a" style="left:0px;top:299px;width:1143px;height:23px;background:#2868b4;"></div>
<div class="a" style="left:902px;top:299px;width:1px;height:23px;background:#b9b9bd;"></div>
<div class="t" style="left:903px;top:297.5px;width:80px;height:23px;line-height:23px;text-align:center;font-size:12px;color:#fff;">120</div>
<div class="t" style="left:983px;top:297.5px;width:80px;height:23px;line-height:23px;text-align:center;font-size:12px;color:#fff;">120</div>
<div class="t" style="left:1063px;top:297.5px;width:80px;height:23px;line-height:23px;text-align:center;font-size:12px;color:#fff;">120</div>
<div class="a" style="left:0px;top:322px;width:902px;height:23px;background:#fff;"></div>
<div class="a" style="left:902px;top:322px;width:241px;height:23px;background:#f0f0f2;"></div>
<div class="hl" style="left:0px;top:344px;width:1143px;"></div>
<div class="a" style="left:60px;top:322px;width:1px;height:23px;background:#b9b9bd;"></div>
<div class="vl" style="left:150px;top:322px;height:23px;"></div>
<div class="vl" style="left:240px;top:322px;height:23px;"></div>
<div class="a" style="left:330px;top:322px;width:1px;height:23px;background:#b9b9bd;"></div>
<div class="vl" style="left:420px;top:322px;height:23px;"></div>
<div class="vl" style="left:510px;top:322px;height:23px;"></div>
<div class="a" style="left:600px;top:322px;width:1px;height:23px;background:#b9b9bd;"></div>
<div class="vl" style="left:690px;top:322px;height:23px;"></div>
<div class="vl" style="left:780px;top:322px;height:23px;"></div>
<div class="a" style="left:870px;top:322px;width:1px;height:23px;background:#b9b9bd;"></div>
<div class="vl" style="left:982px;top:322px;height:23px;"></div>
<div class="vl" style="left:1062px;top:322px;height:23px;"></div>
<div class="a" style="left:902px;top:322px;width:1px;height:23px;background:#b9b9bd;"></div>
<div class="t" style="left:903px;top:320.5px;width:80px;height:23px;line-height:23px;text-align:center;font-size:12px;color:#1b1b1d;">40</div>
<div class="t" style="left:983px;top:320.5px;width:80px;height:23px;line-height:23px;text-align:center;font-size:12px;color:#1b1b1d;">40</div>
<div class="t" style="left:1063px;top:320.5px;width:80px;height:23px;line-height:23px;text-align:center;font-size:12px;color:#1b1b1d;">40</div>
<div class="a" style="left:0px;top:345px;width:902px;height:23px;background:#fff;"></div>
<div class="a" style="left:902px;top:345px;width:241px;height:23px;background:#f0f0f2;"></div>
<div class="hl" style="left:0px;top:367px;width:1143px;"></div>
<div class="a" style="left:60px;top:345px;width:1px;height:23px;background:#b9b9bd;"></div>
<div class="vl" style="left:150px;top:345px;height:23px;"></div>
<div class="vl" style="left:240px;top:345px;height:23px;"></div>
<div class="a" style="left:330px;top:345px;width:1px;height:23px;background:#b9b9bd;"></div>
<div class="vl" style="left:420px;top:345px;height:23px;"></div>
<div class="vl" style="left:510px;top:345px;height:23px;"></div>
<div class="a" style="left:600px;top:345px;width:1px;height:23px;background:#b9b9bd;"></div>
<div class="vl" style="left:690px;top:345px;height:23px;"></div>
<div class="vl" style="left:780px;top:345px;height:23px;"></div>
<div class="a" style="left:870px;top:345px;width:1px;height:23px;background:#b9b9bd;"></div>
<div class="vl" style="left:982px;top:345px;height:23px;"></div>
<div class="vl" style="left:1062px;top:345px;height:23px;"></div>
<div class="a" style="left:902px;top:345px;width:1px;height:23px;background:#b9b9bd;"></div>
<div class="t" style="left:903px;top:343.5px;width:80px;height:23px;line-height:23px;text-align:center;font-size:12px;color:#1b1b1d;">40</div>
<div class="t" style="left:983px;top:343.5px;width:80px;height:23px;line-height:23px;text-align:center;font-size:12px;color:#1b1b1d;">40</div>
<div class="t" style="left:1063px;top:343.5px;width:80px;height:23px;line-height:23px;text-align:center;font-size:12px;color:#1b1b1d;">40</div>
<div class="a" style="left:0px;top:368px;width:902px;height:23px;background:#fff;"></div>
<div class="a" style="left:902px;top:368px;width:241px;height:23px;background:#f0f0f2;"></div>
<div class="hl" style="left:0px;top:390px;width:1143px;"></div>
<div class="a" style="left:60px;top:368px;width:1px;height:23px;background:#b9b9bd;"></div>
<div class="vl" style="left:150px;top:368px;height:23px;"></div>
<div class="vl" style="left:240px;top:368px;height:23px;"></div>
<div class="a" style="left:330px;top:368px;width:1px;height:23px;background:#b9b9bd;"></div>
<div class="vl" style="left:420px;top:368px;height:23px;"></div>
<div class="vl" style="left:510px;top:368px;height:23px;"></div>
<div class="a" style="left:600px;top:368px;width:1px;height:23px;background:#b9b9bd;"></div>
<div class="vl" style="left:690px;top:368px;height:23px;"></div>
<div class="vl" style="left:780px;top:368px;height:23px;"></div>
<div class="a" style="left:870px;top:368px;width:1px;height:23px;background:#b9b9bd;"></div>
<div class="vl" style="left:982px;top:368px;height:23px;"></div>
<div class="vl" style="left:1062px;top:368px;height:23px;"></div>
<div class="a" style="left:902px;top:368px;width:1px;height:23px;background:#b9b9bd;"></div>
<div class="t" style="left:903px;top:366.5px;width:80px;height:23px;line-height:23px;text-align:center;font-size:12px;color:#1b1b1d;">40</div>
<div class="t" style="left:983px;top:366.5px;width:80px;height:23px;line-height:23px;text-align:center;font-size:12px;color:#1b1b1d;">40</div>
<div class="t" style="left:1063px;top:366.5px;width:80px;height:23px;line-height:23px;text-align:center;font-size:12px;color:#1b1b1d;">40</div>
<div class="a" style="left:0px;top:391px;width:1143px;height:23px;background:#2868b4;"></div>
<div class="a" style="left:902px;top:391px;width:1px;height:23px;background:#b9b9bd;"></div>
<div class="t" style="left:903px;top:389.5px;width:80px;height:23px;line-height:23px;text-align:center;font-size:12px;color:#fff;">400</div>
<div class="t" style="left:983px;top:389.5px;width:80px;height:23px;line-height:23px;text-align:center;font-size:12px;color:#fff;">400</div>
<div class="t" style="left:1063px;top:389.5px;width:80px;height:23px;line-height:23px;text-align:center;font-size:12px;color:#fff;">400</div>
<div class="a" style="left:0px;top:414px;width:902px;height:23px;background:#fff;"></div>
<div class="a" style="left:902px;top:414px;width:241px;height:23px;background:#f0f0f2;"></div>
<div class="hl" style="left:0px;top:436px;width:1143px;"></div>
<div class="a" style="left:60px;top:414px;width:1px;height:23px;background:#b9b9bd;"></div>
<div class="vl" style="left:150px;top:414px;height:23px;"></div>
<div class="vl" style="left:240px;top:414px;height:23px;"></div>
<div class="a" style="left:330px;top:414px;width:1px;height:23px;background:#b9b9bd;"></div>
<div class="vl" style="left:420px;top:414px;height:23px;"></div>
<div class="vl" style="left:510px;top:414px;height:23px;"></div>
<div class="a" style="left:600px;top:414px;width:1px;height:23px;background:#b9b9bd;"></div>
<div class="vl" style="left:690px;top:414px;height:23px;"></div>
<div class="vl" style="left:780px;top:414px;height:23px;"></div>
<div class="a" style="left:870px;top:414px;width:1px;height:23px;background:#b9b9bd;"></div>
<div class="vl" style="left:982px;top:414px;height:23px;"></div>
<div class="vl" style="left:1062px;top:414px;height:23px;"></div>
<div class="a" style="left:902px;top:414px;width:1px;height:23px;background:#b9b9bd;"></div>
<div class="t" style="left:903px;top:412.5px;width:80px;height:23px;line-height:23px;text-align:center;font-size:12px;color:#1b1b1d;">40</div>
<div class="t" style="left:983px;top:412.5px;width:80px;height:23px;line-height:23px;text-align:center;font-size:12px;color:#1b1b1d;">40</div>
<div class="t" style="left:1063px;top:412.5px;width:80px;height:23px;line-height:23px;text-align:center;font-size:12px;color:#1b1b1d;">40</div>
<div class="a" style="left:0px;top:437px;width:902px;height:23px;background:#fff;"></div>
<div class="a" style="left:902px;top:437px;width:241px;height:23px;background:#f0f0f2;"></div>
<div class="hl" style="left:0px;top:459px;width:1143px;"></div>
<div class="a" style="left:60px;top:437px;width:1px;height:23px;background:#b9b9bd;"></div>
<div class="vl" style="left:150px;top:437px;height:23px;"></div>
<div class="vl" style="left:240px;top:437px;height:23px;"></div>
<div class="a" style="left:330px;top:437px;width:1px;height:23px;background:#b9b9bd;"></div>
<div class="vl" style="left:420px;top:437px;height:23px;"></div>
<div class="vl" style="left:510px;top:437px;height:23px;"></div>
<div class="a" style="left:600px;top:437px;width:1px;height:23px;background:#b9b9bd;"></div>
<div class="vl" style="left:690px;top:437px;height:23px;"></div>
<div class="vl" style="left:780px;top:437px;height:23px;"></div>
<div class="a" style="left:870px;top:437px;width:1px;height:23px;background:#b9b9bd;"></div>
<div class="vl" style="left:982px;top:437px;height:23px;"></div>
<div class="vl" style="left:1062px;top:437px;height:23px;"></div>
<div class="a" style="left:902px;top:437px;width:1px;height:23px;background:#b9b9bd;"></div>
<div class="t" style="left:903px;top:435.5px;width:80px;height:23px;line-height:23px;text-align:center;font-size:12px;color:#1b1b1d;">40</div>
<div class="t" style="left:983px;top:435.5px;width:80px;height:23px;line-height:23px;text-align:center;font-size:12px;color:#1b1b1d;">40</div>
<div class="t" style="left:1063px;top:435.5px;width:80px;height:23px;line-height:23px;text-align:center;font-size:12px;color:#1b1b1d;">40</div>
</div>
<div class="a" style="left:1910px;top:90px;width:8px;height:499px;background:#f3f3f5;"></div>
<div class="a" style="left:1910px;top:90px;width:8px;height:55px;background:#dcdcde;border-radius:4px;"></div>
<div class="a" style="left:767px;top:589px;width:1151px;height:12px;background:#f3f3f5;"></div>
<div class="a" style="left:1028px;top:590px;width:21px;height:11px;background:#dcdcde;border-radius:6px;"></div>
<div class="a" style="left:45px;top:601px;width:1873px;height:6px;background:#b5b5ba;"></div>
<div class="a" style="left:45px;top:607px;width:1873px;height:54px;background:#fff;border-bottom:1px solid #c9c9cd;"></div>
<div class="t" style="left:8px;top:610.5px;width:300px;height:40px;line-height:40px;text-align:center;font-size:17px;color:#3a3a3e;">Карточка работы</div>
<div class="t" style="left:223px;top:610.5px;width:300px;height:40px;line-height:40px;text-align:center;font-size:17px;color:#3a3a3e;">Связи работы</div>
<div class="t" style="left:450px;top:610.5px;width:300px;height:40px;line-height:40px;text-align:center;font-size:17px;color:#3a3a3e;">Связанные графики</div>
<div class="t" style="left:674px;top:610.5px;width:300px;height:40px;line-height:40px;text-align:center;font-size:17px;color:#3a3a3e;">Справочники</div>
<div class="t" style="left:921px;top:610.5px;width:300px;height:40px;line-height:40px;text-align:center;font-size:17px;color:#1976d2;">Ресурсное планирование</div>
<div class="t" style="left:1155px;top:610.5px;width:300px;height:40px;line-height:40px;text-align:center;font-size:17px;color:#3a3a3e;">Чек-листы</div>
<div class="t" style="left:1374px;top:610.5px;width:300px;height:40px;line-height:40px;text-align:center;font-size:17px;color:#3a3a3e;">Фото / Документация</div>
<div class="t" style="left:1639px;top:610.5px;width:300px;height:40px;line-height:40px;text-align:center;font-size:17px;color:#3a3a3e;">Запросы и поручения</div>
<div class="a" style="left:923px;top:650px;width:296px;height:2px;background:#1976d2;"></div>
<div class="a" style="left:45px;top:661px;width:1873px;height:43px;background:#efeff1;border-bottom:1px solid #c9c9cd;"></div>
<div class="a" style="left:189px;top:661px;width:1px;height:42px;background:#c9c9cd;"></div>
<div class="a" style="left:290px;top:661px;width:1px;height:42px;background:#c9c9cd;"></div>
<div class="a" style="left:391px;top:661px;width:1px;height:42px;background:#c9c9cd;"></div>
<div class="a" style="left:637px;top:661px;width:1px;height:42px;background:#c9c9cd;"></div>
<div class="a" style="left:493px;top:661px;width:43px;height:42px;background:#e0e0e3;"></div>
<svg class="ic" style="left:55.00px;top:671.00px;width:24px;height:24px;color:#4a4a4f" viewBox="0 0 24 24" fill="none" stroke="currentColor" stroke-width="1.7" stroke-linecap="round" stroke-linejoin="round"><path d="M12 0.5v23M0.5 12h23"/></svg>
<svg class="ic" style="left:103.00px;top:671.00px;width:24px;height:24px;color:#c6c6ca" viewBox="0 0 24 24" fill="none" stroke="currentColor" stroke-width="1.7" stroke-linecap="round" stroke-linejoin="round"><path d="M1 7h21M17 2l5 5-5 5M23 17H2M7 12l-5 5 5 5"/></svg>
<svg class="ic" style="left:151.00px;top:671.00px;width:24px;height:24px;color:#c6c6ca" viewBox="0 0 24 24" fill="none" stroke="currentColor" stroke-width="1.7" stroke-linecap="round" stroke-linejoin="round"><path d="M1 4h22"/><path d="M6.5 3.5C6.5 0.5 17.5 0.5 17.5 3.5z" fill="currentColor"/><path d="M4.5 4.5v16a3 3 0 0 0 3 3h9a3 3 0 0 0 3-3v-16"/></svg>
<svg class="ic" style="left:204.00px;top:671.00px;width:24px;height:24px;color:#4a4a4f" viewBox="0 0 24 24" fill="none" stroke="currentColor" stroke-width="1.7" stroke-linecap="round" stroke-linejoin="round"><path d="M1 12C3.5 6.5 7.5 4 12 4s8.5 2.5 11 8c-2.5 5.5-6.5 8-11 8S3.5 17.5 1 12z"/><circle cx="12" cy="12" r="3"/></svg>
<svg class="ic" style="left:251.00px;top:671.00px;width:24px;height:24px;color:#4a4a4f" viewBox="0 0 24 24" fill="none" stroke="currentColor" stroke-width="1.7" stroke-linecap="round" stroke-linejoin="round"><path d="M1 3.5a2 2 0 0 1 2-2h15a2 2 0 0 1 1.5 3.3L14 11.5V20a1.5 1.5 0 0 1-2.2 1.3l-2.5-1.2A1.5 1.5 0 0 1 8.5 19v-7.5L1.5 4.8A2 2 0 0 1 1 3.5z"/><path d="M19 20.5h6l-3 3z" fill="currentColor" stroke="none"/></svg>
<svg class="ic" style="left:305.00px;top:671.00px;width:24px;height:24px;color:#4a4a4f" viewBox="0 0 24 24" fill="none" stroke="currentColor" stroke-width="1.7" stroke-linecap="round" stroke-linejoin="round"><path d="M19.13 1.19L14.51 5.81A2.6 2.6 0 0 0 18.19 9.49L22.81 4.87A7.5 7.5 0 0 1 12.49 14.63L5.06 22.06A2.2 2.2 0 0 1 1.94 18.94L9.37 11.51A7.5 7.5 0 0 1 19.13 1.19Z"/><path d="M17.5 21.3h6l-3 2.7z" fill="currentColor" stroke="none"/></svg>
<svg class="ic" style="left:353.00px;top:671.00px;width:24px;height:24px;color:#4a4a4f" viewBox="0 0 24 24" fill="none" stroke="currentColor" stroke-width="1.7" stroke-linecap="round" stroke-linejoin="round"><rect x="1" y="3.5" width="22" height="19.5" rx="3.5"/><path d="M1 8.5h22M6.5 1v3M17.5 1v3"/><path d="M7.5 8.5v14.5M12 8.5v14.5M16.5 8.5v14.5"/></svg>
<svg class="ic" style="left:406.00px;top:671.00px;width:24px;height:24px;color:#c6c6ca" viewBox="0 0 24 24" fill="none" stroke="currentColor" stroke-width="1.7" stroke-linecap="round" stroke-linejoin="round"><rect x="1" y="3.5" width="22" height="19.5" rx="3.5"/><path d="M1 8.5h22M6.5 1v3M17.5 1v3"/><path d="M5 8.5v14.5"/><path d="M15.5 12v8.5l-5.5-4.25z" fill="currentColor" stroke="none"/></svg>
<svg class="ic" style="left:454.00px;top:671.00px;width:24px;height:24px;color:#c6c6ca" viewBox="0 0 24 24" fill="none" stroke="currentColor" stroke-width="1.7" stroke-linecap="round" stroke-linejoin="round"><rect x="1" y="3.5" width="22" height="19.5" rx="3.5"/><path d="M1 8.5h22M6.5 1v3M17.5 1v3"/><path d="M5 8.5v14.5"/><path d="M10 12v8.5l5.5-4.25z" fill="currentColor" stroke="none"/></svg>
<svg class="ic" style="left:502.00px;top:671.00px;width:24px;height:24px;color:#4a4a4f" viewBox="0 0 24 24" fill="none" stroke="currentColor" stroke-width="1.7" stroke-linecap="round" stroke-linejoin="round"><rect x="1" y="3.5" width="22" height="19.5" rx="3.5"/><path d="M1 8.5h22M6.5 1v3M17.5 1v3"/><text x="12" y="20.5" font-size="11.5" font-weight="bold" text-anchor="middle" fill="currentColor" stroke="none" font-family="Liberation Sans">S</text></svg>
<svg class="ic" style="left:550.00px;top:671.00px;width:24px;height:24px;color:#4a4a4f" viewBox="0 0 24 24" fill="none" stroke="currentColor" stroke-width="1.7" stroke-linecap="round" stroke-linejoin="round"><rect x="1" y="3.5" width="22" height="19.5" rx="3.5"/><path d="M1 8.5h22M6.5 1v3M17.5 1v3"/><text x="12" y="20.5" font-size="11.5" font-weight="bold" text-anchor="middle" fill="currentColor" stroke="none" font-family="Liberation Sans">D</text></svg>
<svg class="ic" style="left:599.00px;top:671.00px;width:24px;height:24px;color:#4a4a4f" viewBox="0 0 24 24" fill="none" stroke="currentColor" stroke-width="1.7" stroke-linecap="round" stroke-linejoin="round"><rect x="1" y="3.5" width="22" height="19.5" rx="3.5"/><path d="M1 8.5h22M6.5 1v3M17.5 1v3"/><text x="12" y="20.5" font-size="11.5" font-weight="bold" text-anchor="middle" fill="currentColor" stroke="none" font-family="Liberation Sans">F</text></svg>
<svg class="ic" style="left:652.00px;top:671.00px;width:24px;height:24px;color:#4a4a4f" viewBox="0 0 24 24" fill="none" stroke="currentColor" stroke-width="1.7" stroke-linecap="round" stroke-linejoin="round"><circle cx="12" cy="12" r="11"/><path d="M5.5 11.5l2.8 2.5 3.3-3M9.8 11.4l3 2.7 5.5-5.5" stroke-width="2.6"/></svg>
<svg class="ic" style="left:700.00px;top:671.00px;width:24px;height:24px;color:#c6c6ca" viewBox="0 0 24 24" fill="none" stroke="currentColor" stroke-width="1.7" stroke-linecap="round" stroke-linejoin="round"><circle cx="12" cy="12" r="11"/><path d="M7.8 12.5l3.2 3 5.5-6" stroke-width="1.7"/></svg>
<svg class="ic" style="left:748.00px;top:671.00px;width:24px;height:24px;color:#c6c6ca" viewBox="0 0 24 24" fill="none" stroke="currentColor" stroke-width="1.7" stroke-linecap="round" stroke-linejoin="round"><circle cx="12" cy="12" r="11"/><path d="M8.3 8.3l7.4 7.4M15.7 8.3l-7.4 7.4" stroke-width="1.7"/></svg>
<svg class="ic" style="left:1888.00px;top:671.00px;width:24px;height:24px;color:#4a4a4f" viewBox="0 0 24 24" fill="none" stroke="currentColor" stroke-width="1.7" stroke-linecap="round" stroke-linejoin="round"><rect x="1" y="1" width="22" height="22" rx="3"/><path d="M15.5 1v22"/></svg>
<div class="t" style="left:53px;top:704px;width:888px;height:26px;line-height:26px;text-align:left;font-size:15px;color:#1b1b1d;">02.01.03 Устройство буронабивных свай захватка 3. Сроки Invalid date - Invalid date. Прогресс: 100%.</div>
<div class="a" style="left:45px;top:729px;width:896px;height:182px;background:#fff;border-left:2px solid #b5b5ba;"></div>
<div class="a" style="left:47px;top:729px;width:894px;height:23px;background:#efeff1;border-bottom:1px solid #c9c9cd;border-top:1px solid #c9c9cd;"></div>
<div class="t" style="left:47px;top:730px;width:298px;height:23px;line-height:23px;text-align:center;font-size:12.5px;font-weight:bold;letter-spacing:-0.1px;">Наименование</div>
<div class="t" style="left:345px;top:730px;width:151px;height:23px;line-height:23px;text-align:center;font-size:12.5px;font-weight:bold;letter-spacing:-0.1px;">Ед. измерения</div>
<div class="a" style="left:345px;top:729px;width:1px;height:182px;background:#c9c9cd;"></div>
<div class="t" style="left:496px;top:730px;width:150px;height:23px;line-height:23px;text-align:center;font-size:12.5px;font-weight:bold;letter-spacing:-0.1px;">Плановое количество</div>
<div class="a" style="left:496px;top:729px;width:1px;height:182px;background:#c9c9cd;"></div>
<div class="t" style="left:646px;top:730px;width:150px;height:23px;line-height:23px;text-align:center;font-size:12.5px;font-weight:bold;letter-spacing:-0.1px;">Фактическое количе...</div>
<div class="a" style="left:646px;top:729px;width:1px;height:182px;background:#c9c9cd;"></div>
<div class="t" style="left:802px;top:730px;width:139px;height:23px;line-height:23px;text-align:center;font-size:12.5px;font-weight:bold;letter-spacing:-0.1px;">Остаток</div>
<div class="a" style="left:796px;top:729px;width:1px;height:182px;background:#c9c9cd;"></div>
<div class="a" style="left:47px;top:782px;width:882px;height:1px;background:#c9c9cd;"></div>
<div class="t" style="left:78px;top:752px;width:260px;height:30px;line-height:30px;text-align:left;font-size:14px;">Стоимость по ресурсам</div>
<div class="t" style="left:345px;top:753px;width:151px;height:30px;line-height:30px;text-align:center;font-size:14px;"></div>
<div class="t" style="left:496px;top:753px;width:150px;height:30px;line-height:30px;text-align:center;font-size:14px;">103 040</div>
<div class="t" style="left:646px;top:753px;width:150px;height:30px;line-height:30px;text-align:center;font-size:14px;">103 040</div>
<div class="t" style="left:802px;top:753px;width:139px;height:30px;line-height:30px;text-align:center;font-size:14px;">0</div>
<div class="a" style="left:47px;top:812px;width:882px;height:1px;background:#c9c9cd;"></div>
<div class="t" style="left:78px;top:782px;width:260px;height:30px;line-height:30px;text-align:left;font-size:14px;">Трудозатраты по ресурсам</div>
<div class="t" style="left:345px;top:783px;width:151px;height:30px;line-height:30px;text-align:center;font-size:14px;"></div>
<div class="t" style="left:496px;top:783px;width:150px;height:30px;line-height:30px;text-align:center;font-size:14px;">48</div>
<div class="t" style="left:646px;top:783px;width:150px;height:30px;line-height:30px;text-align:center;font-size:14px;">48</div>
<div class="t" style="left:802px;top:783px;width:139px;height:30px;line-height:30px;text-align:center;font-size:14px;">24</div>
<div class="a" style="left:47px;top:842px;width:882px;height:1px;background:#c9c9cd;"></div>
<div class="t" style="left:78px;top:812px;width:260px;height:30px;line-height:30px;text-align:left;font-size:14px;">Физобъем</div>
<div class="t" style="left:345px;top:813px;width:151px;height:30px;line-height:30px;text-align:center;font-size:14px;">нет</div>
<div class="t" style="left:496px;top:813px;width:150px;height:30px;line-height:30px;text-align:center;font-size:14px;">4</div>
<div class="t" style="left:646px;top:813px;width:150px;height:30px;line-height:30px;text-align:center;font-size:14px;">4</div>
<div class="t" style="left:802px;top:813px;width:139px;height:30px;line-height:30px;text-align:center;font-size:14px;">4</div>
<div class="a" style="left:47px;top:876px;width:882px;height:1px;background:#c9c9cd;"></div>
<div class="t" style="left:146px;top:847px;width:200px;height:30px;line-height:30px;text-align:left;font-size:14px;">Ивановец</div>
<div class="t" style="left:345px;top:847px;width:151px;height:30px;line-height:30px;text-align:center;font-size:14px;">м-ч</div>
<div class="t" style="left:496px;top:847px;width:150px;height:30px;line-height:30px;text-align:center;font-size:14px;">180</div>
<div class="t" style="left:646px;top:847px;width:150px;height:30px;line-height:30px;text-align:center;font-size:14px;">180</div>
<div class="t" style="left:802px;top:847px;width:139px;height:30px;line-height:30px;text-align:center;font-size:14px;">0</div>
<div class="a" style="left:47px;top:906px;width:882px;height:1px;background:#c9c9cd;"></div>
<div class="t" style="left:146px;top:877px;width:200px;height:30px;line-height:30px;text-align:left;font-size:14px;">Liebherr</div>
<div class="t" style="left:345px;top:877px;width:151px;height:30px;line-height:30px;text-align:center;font-size:14px;">м-ч</div>
<div class="t" style="left:496px;top:877px;width:150px;height:30px;line-height:30px;text-align:center;font-size:14px;">900</div>
<div class="t" style="left:646px;top:877px;width:150px;height:30px;line-height:30px;text-align:center;font-size:14px;">900</div>
<div class="t" style="left:802px;top:877px;width:139px;height:30px;line-height:30px;text-align:center;font-size:14px;">0</div>
<div class="a" style="left:47px;top:842px;width:882px;height:5px;background:#fff;border-top:1px solid #c9c9cd;border-bottom:1px solid #c9c9cd;"></div>
<svg class="ic" style="left:49px;top:756px;width:22px;height:22px" viewBox="0 0 22 22" fill="none" stroke="#4a4a4f" stroke-width="1.3"><circle cx="11" cy="11" r="9.8"/><rect x="10" y="4.5" width="5" height="3.2" rx="1"/><rect x="10" y="7.7" width="5" height="3.2" rx="1"/><rect x="6" y="11" width="5" height="3.2" rx="1"/><rect x="6" y="14.2" width="5" height="3.2" rx="1"/><rect x="11" y="11" width="5" height="3.2" rx="1"/><rect x="11" y="14.2" width="5" height="3.2" rx="1"/></svg>
<svg class="ic" style="left:49px;top:786px;width:22px;height:22px" viewBox="0 0 22 22" fill="none" stroke="#4a4a4f" stroke-width="1.3"><circle cx="11" cy="11" r="9.8"/><circle cx="11" cy="8" r="2.8" fill="#4a4a4f" stroke="none"/><path d="M5.5 16.5c0-3 2.5-4.5 5.5-4.5s5.5 1.5 5.5 4.5z" fill="#4a4a4f" stroke="none"/></svg>
<svg class="ic" style="left:49px;top:816px;width:22px;height:22px" viewBox="0 0 22 22" fill="none" stroke="#4a4a4f" stroke-width="2"><circle cx="11" cy="11" r="9.5"/><path d="M1.8 9.5c3 .8 5.5 1.3 9.2 1.3s6.2-.5 9.2-1.3M9 12.5c0 3-1.5 5.5-2.5 8M13 12.5c0 3 1.5 5.5 2.5 8"/><circle cx="11" cy="11.5" r="2" fill="#4a4a4f"/></svg>
<svg class="ic" style="left:93px;top:847px;width:22px;height:18px" viewBox="0 0 22 18" fill="none" stroke="#111" stroke-width="2"><path d="M1.7 1v15h19.3"/></svg>
<svg class="ic" style="left:118px;top:853px;width:20px;height:15px" viewBox="0 0 24 18"><g fill="#4a4a4f"><path d="M0.5 2L15.5 0.5V9H1z"/><path d="M16 3h4.5l3.5 4.5V14.5H16z"/><rect x="0.5" y="8.5" width="23.5" height="6"/><circle cx="6" cy="15" r="3"/><circle cx="18.5" cy="15" r="3"/></g><g fill="#fff"><rect x="3" y="3" width="2" height="4"/><rect x="7" y="2.7" width="2" height="4.3"/><rect x="11" y="2.3" width="2" height="4.7"/><path d="M17.5 4.5h2.5l2.3 3v1.2H17.5z"/><circle cx="6" cy="15" r="1.2"/><circle cx="18.5" cy="15" r="1.2"/></g></svg>
<svg class="ic" style="left:93px;top:877px;width:22px;height:18px" viewBox="0 0 22 18" fill="none" stroke="#111" stroke-width="2"><path d="M1.7 1v15h19.3"/></svg>
<svg class="ic" style="left:118px;top:883px;width:20px;height:15px" viewBox="0 0 24 18"><g fill="#4a4a4f"><path d="M0.5 2L15.5 0.5V9H1z"/><path d="M16 3h4.5l3.5 4.5V14.5H16z"/><rect x="0.5" y="8.5" width="23.5" height="6"/><circle cx="6" cy="15" r="3"/><circle cx="18.5" cy="15" r="3"/></g><g fill="#fff"><rect x="3" y="3" width="2" height="4"/><rect x="7" y="2.7" width="2" height="4.3"/><rect x="11" y="2.3" width="2" height="4.7"/><path d="M17.5 4.5h2.5l2.3 3v1.2H17.5z"/><circle cx="6" cy="15" r="1.2"/><circle cx="18.5" cy="15" r="1.2"/></g></svg>
<div class="a" style="left:929px;top:752px;width:12px;height:154px;background:#f3f3f5;"></div>
<div class="a" style="left:929px;top:859px;width:12px;height:19px;background:#dcdcde;border-radius:6px;"></div>
<div class="a" style="left:47px;top:906px;width:882px;height:5px;background:#f3f3f5;"></div>
<div class="a" style="left:345px;top:906px;width:133px;height:5px;background:#dcdcde;border-radius:3px;"></div>
<div class="a" style="left:946px;top:704px;width:963px;height:207px;background:#efeff1;"></div>
<div class="a" style="left:1898px;top:704px;width:20px;height:207px;background:#f3f3f5;"></div>
<div class="a" style="left:1898px;top:774px;width:12px;height:140px;background:#dcdcde;border-radius:6px;"></div>
<div class="a" style="left:1910px;top:705px;width:8px;height:145px;background:#dcdcde;border-radius:4px;"></div>
<div class="a" style="left:946px;top:728px;width:951px;height:1px;background:#c9c9cd;"></div>
<div class="a" style="left:946px;top:752px;width:951px;height:1px;background:#c9c9cd;"></div>
<div class="a" style="left:946px;top:704px;width:951px;height:207px;overflow:hidden;">
<div class="a" style="left:0px;top:142px;width:700px;height:30px;background:#c4dbf1;"></div>
<div class="a" style="left:700px;top:142px;width:251px;height:30px;background:#fff;"></div>
<div class="a" style="left:0px;top:172px;width:700px;height:30px;background:#c4dbf1;"></div>
<div class="a" style="left:700px;top:172px;width:251px;height:30px;background:#fff;"></div>
<div class="a" style="left:0px;top:202px;width:700px;height:30px;background:#c4dbf1;"></div>
<div class="a" style="left:700px;top:202px;width:251px;height:30px;background:#fff;"></div>
<div class="t" style="left:0px;top:0px;width:350px;height:24px;line-height:24px;text-align:center;font-size:11.5px;">20.10.2025</div>
<div class="t" style="left:0px;top:25px;width:70px;height:23px;line-height:23px;text-align:center;font-size:11.5px;">Согл.план</div>
<div class="t" style="left:70px;top:25px;width:70px;height:23px;line-height:23px;text-align:center;font-size:11.5px;">Опер.план</div>
<div class="vl" style="left:70px;top:25px;height:182px;"></div>
<div class="t" style="left:140px;top:25px;width:70px;height:23px;line-height:23px;text-align:center;font-size:11.5px;">Факт</div>
<div class="vl" style="left:140px;top:25px;height:182px;"></div>
<div class="t" style="left:210px;top:25px;width:70px;height:23px;line-height:23px;text-align:center;font-size:11.5px;">Уд. трудоз...</div>
<div class="vl" style="left:210px;top:25px;height:182px;"></div>
<div class="t" style="left:280px;top:25px;width:70px;height:23px;line-height:23px;text-align:center;font-size:11.5px;">Ставка</div>
<div class="vl" style="left:280px;top:25px;height:182px;"></div>
<div class="t" style="left:350px;top:0px;width:350px;height:24px;line-height:24px;text-align:center;font-size:11.5px;">21.10.2025</div>
<div class="a" style="left:350px;top:0px;width:1px;height:138px;background:#b9b9bd;"></div>
<div class="t" style="left:350px;top:25px;width:70px;height:23px;line-height:23px;text-align:center;font-size:11.5px;">Согл.план</div>
<div class="t" style="left:420px;top:25px;width:70px;height:23px;line-height:23px;text-align:center;font-size:11.5px;">Опер.план</div>
<div class="vl" style="left:420px;top:25px;height:182px;"></div>
<div class="t" style="left:490px;top:25px;width:70px;height:23px;line-height:23px;text-align:center;font-size:11.5px;">Факт</div>
<div class="vl" style="left:490px;top:25px;height:182px;"></div>
<div class="t" style="left:560px;top:25px;width:70px;height:23px;line-height:23px;text-align:center;font-size:11.5px;">Уд. трудоз...</div>
<div class="vl" style="left:560px;top:25px;height:182px;"></div>
<div class="t" style="left:630px;top:25px;width:70px;height:23px;line-height:23px;text-align:center;font-size:11.5px;">Ставка</div>
<div class="vl" style="left:630px;top:25px;height:182px;"></div>
<div class="t" style="left:700px;top:0px;width:350px;height:24px;line-height:24px;text-align:center;font-size:11.5px;">22.10.2025</div>
<div class="a" style="left:700px;top:0px;width:1px;height:138px;background:#b9b9bd;"></div>
<div class="t" style="left:700px;top:25px;width:70px;height:23px;line-height:23px;text-align:center;font-size:11.5px;">Согл.план</div>
<div class="t" style="left:770px;top:25px;width:70px;height:23px;line-height:23px;text-align:center;font-size:11.5px;">Опер.план</div>
<div class="vl" style="left:770px;top:25px;height:182px;"></div>
<div class="t" style="left:840px;top:25px;width:70px;height:23px;line-height:23px;text-align:center;font-size:11.5px;">Факт</div>
<div class="vl" style="left:840px;top:25px;height:182px;"></div>
<div class="t" style="left:910px;top:25px;width:70px;height:23px;line-height:23px;text-align:center;font-size:11.5px;">Уд. трудоз...</div>
<div class="vl" style="left:910px;top:25px;height:182px;"></div>
<div class="t" style="left:980px;top:25px;width:70px;height:23px;line-height:23px;text-align:center;font-size:11.5px;">Ставка</div>
<div class="vl" style="left:980px;top:25px;height:182px;"></div>
<div class="hl" style="left:0px;top:77px;width:951px;"></div>
<div class="hl" style="left:0px;top:107px;width:951px;"></div>
<div class="hl" style="left:0px;top:137px;width:951px;"></div>
<div class="hl" style="left:0px;top:171px;width:951px;"></div>
<div class="hl" style="left:0px;top:201px;width:951px;"></div>
<div class="hl" style="left:0px;top:138px;width:951px;"></div>
<svg class="ic" style="left:140px;top:204px;width:20px;height:20px" viewBox="0 0 20 20"><path d="M0 0h20L0 20z" fill="#9fd9a8"/></svg>
<svg class="ic" style="left:490px;top:204px;width:20px;height:20px" viewBox="0 0 20 20"><path d="M0 0h20L0 20z" fill="#9fd9a8"/></svg>
<div class="t" style="left:2px;top:49px;width:70px;height:30px;line-height:30px;text-align:center;font-size:12px;color:#1b1b1d;">51 520</div>
<div class="t" style="left:72px;top:49px;width:70px;height:30px;line-height:30px;text-align:center;font-size:12px;color:#1b1b1d;">51 520</div>
<div class="t" style="left:142px;top:49px;width:70px;height:30px;line-height:30px;text-align:center;font-size:12px;color:#1b1b1d;">51 520</div>
<div class="t" style="left:352px;top:49px;width:70px;height:30px;line-height:30px;text-align:center;font-size:12px;color:#1b1b1d;">51 520</div>
<div class="t" style="left:422px;top:49px;width:70px;height:30px;line-height:30px;text-align:center;font-size:12px;color:#1b1b1d;">51 520</div>
<div class="t" style="left:492px;top:49px;width:70px;height:30px;line-height:30px;text-align:center;font-size:12px;color:#1b1b1d;">51 520</div>
<div class="t" style="left:2px;top:79px;width:70px;height:30px;line-height:30px;text-align:center;font-size:12px;color:#1b1b1d;">12</div>
<div class="t" style="left:72px;top:79px;width:70px;height:30px;line-height:30px;text-align:center;font-size:12px;color:#1b1b1d;">12</div>
<div class="t" style="left:142px;top:79px;width:70px;height:30px;line-height:30px;text-align:center;font-size:12px;color:#1b1b1d;">12</div>
<div class="t" style="left:352px;top:79px;width:70px;height:30px;line-height:30px;text-align:center;font-size:12px;color:#1b1b1d;">12</div>
<div class="t" style="left:422px;top:79px;width:70px;height:30px;line-height:30px;text-align:center;font-size:12px;color:#1b1b1d;">12</div>
<div class="t" style="left:492px;top:79px;width:70px;height:30px;line-height:30px;text-align:center;font-size:12px;color:#1b1b1d;">12</div>
<div class="t" style="left:2px;top:143px;width:70px;height:30px;line-height:30px;text-align:center;font-size:12px;color:#7a7a80;">90</div>
<div class="t" style="left:72px;top:143px;width:70px;height:30px;line-height:30px;text-align:center;font-size:12px;color:#7a7a80;">90</div>
<svg class="ic" style="left:140px;top:144px;width:20px;height:20px" viewBox="0 0 20 20"><path d="M0 0h20L0 20z" fill="#9fd9a8"/></svg>
<div class="t" style="left:142px;top:143px;width:70px;height:30px;line-height:30px;text-align:center;font-size:12px;color:#7fcf8f;">90</div>
<div class="t" style="left:212px;top:143px;width:70px;height:30px;line-height:30px;text-align:center;font-size:12px;color:#7a7a80;">6</div>
<div class="t" style="left:282px;top:143px;width:70px;height:30px;line-height:30px;text-align:center;font-size:12px;color:#7a7a80;">8 000</div>
<div class="t" style="left:352px;top:143px;width:70px;height:30px;line-height:30px;text-align:center;font-size:12px;color:#7a7a80;">90</div>
<div class="t" style="left:422px;top:143px;width:70px;height:30px;line-height:30px;text-align:center;font-size:12px;color:#7a7a80;">90</div>
<svg class="ic" style="left:490px;top:144px;width:20px;height:20px" viewBox="0 0 20 20"><path d="M0 0h20L0 20z" fill="#9fd9a8"/></svg>
<div class="t" style="left:492px;top:143px;width:70px;height:30px;line-height:30px;text-align:center;font-size:12px;color:#7fcf8f;">90</div>
<div class="t" style="left:562px;top:143px;width:70px;height:30px;line-height:30px;text-align:center;font-size:12px;color:#7a7a80;">6</div>
<div class="t" style="left:632px;top:143px;width:70px;height:30px;line-height:30px;text-align:center;font-size:12px;color:#7a7a80;">8 000</div>
<div class="t" style="left:912px;top:143px;width:70px;height:30px;line-height:30px;text-align:center;font-size:12px;color:#7a7a80;">6</div>
<div class="t" style="left:2px;top:173px;width:70px;height:30px;line-height:30px;text-align:center;font-size:12px;color:#7a7a80;">450</div>
<div class="t" style="left:72px;top:173px;width:70px;height:30px;line-height:30px;text-align:center;font-size:12px;color:#7a7a80;">450</div>
<svg class="ic" style="left:140px;top:174px;width:20px;height:20px" viewBox="0 0 20 20"><path d="M0 0h20L0 20z" fill="#9fd9a8"/></svg>
<div class="t" style="left:142px;top:173px;width:70px;height:30px;line-height:30px;text-align:center;font-size:12px;color:#7fcf8f;">450</div>
<div class="t" style="left:212px;top:173px;width:70px;height:30px;line-height:30px;text-align:center;font-size:12px;color:#7a7a80;">6</div>
<div class="t" style="left:282px;top:173px;width:70px;height:30px;line-height:30px;text-align:center;font-size:12px;color:#7a7a80;">16 800</div>
<div class="t" style="left:352px;top:173px;width:70px;height:30px;line-height:30px;text-align:center;font-size:12px;color:#7a7a80;">450</div>
<div class="t" style="left:422px;top:173px;width:70px;height:30px;line-height:30px;text-align:center;font-size:12px;color:#7a7a80;">450</div>
<svg class="ic" style="left:490px;top:174px;width:20px;height:20px" viewBox="0 0 20 20"><path d="M0 0h20L0 20z" fill="#9fd9a8"/></svg>
<div class="t" style="left:492px;top:173px;width:70px;height:30px;line-height:30px;text-align:center;font-size:12px;color:#7fcf8f;">450</div>
<div class="t" style="left:562px;top:173px;width:70px;height:30px;line-height:30px;text-align:center;font-size:12px;color:#7a7a80;">6</div>
<div class="t" style="left:632px;top:173px;width:70px;height:30px;line-height:30px;text-align:center;font-size:12px;color:#7a7a80;">16 800</div>
<div class="t" style="left:912px;top:173px;width:70px;height:30px;line-height:30px;text-align:center;font-size:12px;color:#7a7a80;">6</div>
</div>
<div class="a" style="left:942px;top:704px;width:5px;height:207px;background:#b5b5ba;"></div>
<div class="a" style="left:942.5px;top:799px;width:4px;height:4px;background:#4a4a4f;border-radius:50%;"></div>
<div class="a" style="left:942.5px;top:806px;width:4px;height:4px;background:#4a4a4f;border-radius:50%;"></div>
<div class="a" style="left:942.5px;top:813px;width:4px;height:4px;background:#4a4a4f;border-radius:50%;"></div>
<div class="a" style="left:695px;top:90px;width:563px;height:456px;background:#f3f3f6;border-radius:4px;box-shadow:0 3px 8px rgba(0,0,0,.22),0 0 2px rgba(0,0,0,.15);"></div>
<div class="a" style="left:695px;top:534px;width:554px;height:11px;background:#dcdcde;border-radius:6px;"></div>
<div class="a" style="left:711px;top:105px;width:266px;height:40px;border:1px solid #c4c4c8;border-radius:4px;"></div>
<div class="t" style="left:723px;top:108px;width:240px;height:16px;line-height:16px;text-align:left;font-size:11.5px;color:#8a8a90;">Детализация план/факта</div>
<div class="t" style="left:723px;top:122px;width:200px;height:20px;line-height:20px;text-align:left;font-size:15px;color:#1b1b1d;">День</div>
<svg class="ic" style="left:946px;top:121px;width:12px;height:8px" viewBox="0 0 12 8"><path d="M1 1h10l-5 5z" fill="#4a4a4f"/></svg>
<div class="t" style="left:711px;top:151px;width:270px;height:22px;line-height:22px;text-align:left;font-size:15px;color:#1b1b1d;">Выберите колонки для экспорта:</div>
<div class="a" style="left:721px;top:181px;width:26px;height:10px;background:#80b3e6;border-radius:5px;"></div>
<div class="a" style="left:731px;top:178px;width:16px;height:16px;background:#1976d2;border-radius:50%;box-shadow:0 1px 2px rgba(0,0,0,.3);"></div>
<div class="t" style="left:753px;top:175px;width:200px;height:22px;line-height:22px;text-align:left;font-size:15px;color:#1b1b1d;">Согл.план</div>
<div class="a" style="left:722px;top:211px;width:23px;height:10px;background:#9a9aa0;border-radius:5px;"></div>
<div class="a" style="left:718px;top:208px;width:16px;height:16px;background:#fff;border-radius:50%;box-shadow:0 1px 3px rgba(0,0,0,.35);"></div>
<div class="t" style="left:753px;top:205px;width:200px;height:22px;line-height:22px;text-align:left;font-size:15px;color:#1b1b1d;">Опер.план</div>
<div class="a" style="left:721px;top:241px;width:26px;height:10px;background:#80b3e6;border-radius:5px;"></div>
<div class="a" style="left:731px;top:238px;width:16px;height:16px;background:#1976d2;border-radius:50%;box-shadow:0 1px 2px rgba(0,0,0,.3);"></div>
<div class="t" style="left:753px;top:235px;width:200px;height:22px;line-height:22px;text-align:left;font-size:15px;color:#1b1b1d;">Факт</div>
<div class="a" style="left:721px;top:271px;width:26px;height:10px;background:#80b3e6;border-radius:5px;"></div>
<div class="a" style="left:731px;top:268px;width:16px;height:16px;background:#1976d2;border-radius:50%;box-shadow:0 1px 2px rgba(0,0,0,.3);"></div>
<div class="t" style="left:753px;top:265px;width:200px;height:22px;line-height:22px;text-align:left;font-size:15px;color:#1b1b1d;">Уд. трудозатраты</div>
<div class="a" style="left:722px;top:301px;width:23px;height:10px;background:#9a9aa0;border-radius:5px;"></div>
<div class="a" style="left:718px;top:298px;width:16px;height:16px;background:#fff;border-radius:50%;box-shadow:0 1px 3px rgba(0,0,0,.35);"></div>
<div class="t" style="left:753px;top:295px;width:200px;height:22px;line-height:22px;text-align:left;font-size:15px;color:#1b1b1d;">Ставка</div>
<div class="t" style="left:711px;top:327px;width:270px;height:22px;line-height:22px;text-align:left;font-size:15px;color:#1b1b1d;">Выберите элементы для экспорта:</div>
<div class="a" style="left:711px;top:361px;width:266px;height:35px;border:1px solid #c4c4c8;border-radius:4px;"></div>
<div class="t" style="left:723px;top:367px;width:220px;height:22px;line-height:22px;text-align:left;font-size:15px;color:#1b1b1d;">СДР. Машины и механизмы</div>
<svg class="ic" style="left:946px;top:375px;width:12px;height:8px" viewBox="0 0 12 8"><path d="M1 1h10l-5 5z" fill="#4a4a4f"/></svg>
<div class="a" style="left:711px;top:414px;width:266px;height:35px;border:1px solid #c4c4c8;border-radius:4px;"></div>
<div class="t" style="left:723px;top:420px;width:220px;height:22px;line-height:22px;text-align:left;font-size:15px;color:#1b1b1d;">JCB</div>
<svg class="ic" style="left:946px;top:428px;width:12px;height:8px" viewBox="0 0 12 8"><path d="M1 1h10l-5 5z" fill="#4a4a4f"/></svg>
<div class="t" style="left:993px;top:104px;width:200px;height:22px;line-height:22px;text-align:left;font-size:15px;color:#1b1b1d;">За период:</div>
<svg class="ic" style="left:999.00px;top:148.30px;width:12px;height:12px;color:#1b1b1d" viewBox="0 0 24 24" fill="none" stroke="currentColor" stroke-width="4.2" stroke-linecap="round" stroke-linejoin="round"><path d="M16 2L6 12l10 10"/></svg>
<svg class="ic" style="left:1127.00px;top:148.30px;width:12px;height:12px;color:#1b1b1d" viewBox="0 0 24 24" fill="none" stroke="currentColor" stroke-width="4.2" stroke-linecap="round" stroke-linejoin="round"><path d="M8 2l10 10-10 10"/></svg>
<svg class="ic" style="left:1152.00px;top:148.30px;width:12px;height:12px;color:#1b1b1d" viewBox="0 0 24 24" fill="none" stroke="currentColor" stroke-width="4.2" stroke-linecap="round" stroke-linejoin="round"><path d="M16 2L6 12l10 10"/></svg>
<svg class="ic" style="left:1232.00px;top:148.30px;width:12px;height:12px;color:#1b1b1d" viewBox="0 0 24 24" fill="none" stroke="currentColor" stroke-width="4.2" stroke-linecap="round" stroke-linejoin="round"><path d="M8 2l10 10-10 10"/></svg>
<div class="t" style="left:1029px;top:143px;width:80px;height:22px;line-height:22px;text-align:center;font-size:15px;color:#1b1b1d;">Март</div>
<div class="t" style="left:1168px;top:143px;width:60px;height:22px;line-height:22px;text-align:center;font-size:15px;color:#1b1b1d;">2026</div>
<div class="t" style="left:993.0px;top:175px;width:36px;height:22px;line-height:22px;text-align:center;font-size:12px;color:#a5a5aa;">Пн</div>
<div class="t" style="left:1029.9px;top:175px;width:36px;height:22px;line-height:22px;text-align:center;font-size:12px;color:#a5a5aa;">Вт</div>
<div class="t" style="left:1066.8px;top:175px;width:36px;height:22px;line-height:22px;text-align:center;font-size:12px;color:#a5a5aa;">Ср</div>
<div class="t" style="left:1103.7px;top:175px;width:36px;height:22px;line-height:22px;text-align:center;font-size:12px;color:#a5a5aa;">Чт</div>
<div class="t" style="left:1140.6px;top:175px;width:36px;height:22px;line-height:22px;text-align:center;font-size:12px;color:#a5a5aa;">Пт</div>
<div class="t" style="left:1177.5px;top:175px;width:36px;height:22px;line-height:22px;text-align:center;font-size:12px;color:#a5a5aa;">Сб</div>
<div class="t" style="left:1214.4px;top:175px;width:36px;height:22px;line-height:22px;text-align:center;font-size:12px;color:#a5a5aa;">Вс</div>
<div class="t" style="left:1214.4px;top:207px;width:36px;height:22px;line-height:22px;text-align:center;font-size:14px;color:#1b1b1d;">1</div>
<div class="a" style="left:1011px;top:235px;width:239px;height:30px;background:#b3cdea;"></div>
<div class="a" style="left:993px;top:267px;width:257px;height:30px;background:#b3cdea;"></div>
<div class="a" style="left:993px;top:299px;width:257px;height:30px;background:#b3cdea;"></div>
<div class="a" style="left:993px;top:331px;width:92px;height:30px;background:#b3cdea;"></div>
<div class="a" style="left:996px;top:235px;width:30px;height:30px;background:#1976d2;border-radius:50%;"></div>
<div class="a" style="left:1070px;top:331px;width:30px;height:30px;background:#1976d2;border-radius:50%;"></div>
<div class="t" style="left:993.0px;top:239px;width:36px;height:22px;line-height:22px;text-align:center;font-size:15px;color:#fff;">2</div>
<div class="t" style="left:1029.9px;top:239px;width:36px;height:22px;line-height:22px;text-align:center;font-size:15px;color:#fff;">3</div>
<div class="t" style="left:1066.8px;top:239px;width:36px;height:22px;line-height:22px;text-align:center;font-size:15px;color:#fff;">4</div>
<div class="t" style="left:1103.7px;top:239px;width:36px;height:22px;line-height:22px;text-align:center;font-size:15px;color:#fff;">5</div>
<div class="t" style="left:1140.6px;top:239px;width:36px;height:22px;line-height:22px;text-align:center;font-size:15px;color:#fff;">6</div>
<div class="t" style="left:1177.5px;top:239px;width:36px;height:22px;line-height:22px;text-align:center;font-size:15px;color:#fff;">7</div>
<div class="t" style="left:1214.4px;top:239px;width:36px;height:22px;line-height:22px;text-align:center;font-size:15px;color:#fff;">8</div>
<div class="t" style="left:993.0px;top:271px;width:36px;height:22px;line-height:22px;text-align:center;font-size:15px;color:#fff;">9</div>
<div class="t" style="left:1029.9px;top:271px;width:36px;height:22px;line-height:22px;text-align:center;font-size:15px;color:#fff;">10</div>
<div class="t" style="left:1066.8px;top:271px;width:36px;height:22px;line-height:22px;text-align:center;font-size:15px;color:#fff;">11</div>
<div class="t" style="left:1103.7px;top:271px;width:36px;height:22px;line-height:22px;text-align:center;font-size:15px;color:#fff;">12</div>
<div class="t" style="left:1140.6px;top:271px;width:36px;height:22px;line-height:22px;text-align:center;font-size:15px;color:#fff;">13</div>
<div class="t" style="left:1177.5px;top:271px;width:36px;height:22px;line-height:22px;text-align:center;font-size:15px;color:#fff;">14</div>
<div class="t" style="left:1214.4px;top:271px;width:36px;height:22px;line-height:22px;text-align:center;font-size:15px;color:#fff;">15</div>
<div class="t" style="left:993.0px;top:303px;width:36px;height:22px;line-height:22px;text-align:center;font-size:15px;color:#fff;">16</div>
<div class="t" style="left:1029.9px;top:303px;width:36px;height:22px;line-height:22px;text-align:center;font-size:15px;color:#fff;">17</div>
<div class="t" style="left:1066.8px;top:303px;width:36px;height:22px;line-height:22px;text-align:center;font-size:15px;color:#fff;">18</div>
<div class="t" style="left:1103.7px;top:303px;width:36px;height:22px;line-height:22px;text-align:center;font-size:15px;color:#fff;">19</div>
<div class="t" style="left:1140.6px;top:303px;width:36px;height:22px;line-height:22px;text-align:center;font-size:15px;color:#fff;">20</div>
<div class="t" style="left:1177.5px;top:303px;width:36px;height:22px;line-height:22px;text-align:center;font-size:15px;color:#fff;">21</div>
<div class="t" style="left:1214.4px;top:303px;width:36px;height:22px;line-height:22px;text-align:center;font-size:15px;color:#fff;">22</div>
<div class="t" style="left:993.0px;top:335px;width:36px;height:22px;line-height:22px;text-align:center;font-size:15px;color:#fff;">23</div>
<div class="t" style="left:1029.9px;top:335px;width:36px;height:22px;line-height:22px;text-align:center;font-size:15px;color:#fff;">24</div>
<div class="t" style="left:1066.8px;top:335px;width:36px;height:22px;line-height:22px;text-align:center;font-size:15px;color:#fff;">25</div>
<div class="t" style="left:1103.7px;top:335px;width:36px;height:22px;line-height:22px;text-align:center;font-size:15px;color:#1b1b1d;">26</div>
<div class="t" style="left:1140.6px;top:335px;width:36px;height:22px;line-height:22px;text-align:center;font-size:15px;color:#1b1b1d;">27</div>
<div class="t" style="left:1177.5px;top:335px;width:36px;height:22px;line-height:22px;text-align:center;font-size:15px;color:#1b1b1d;">28</div>
<div class="t" style="left:1214.4px;top:335px;width:36px;height:22px;line-height:22px;text-align:center;font-size:15px;color:#1b1b1d;">29</div>
<div class="t" style="left:993.0px;top:367px;width:36px;height:22px;line-height:22px;text-align:center;font-size:15px;color:#1b1b1d;">30</div>
<div class="t" style="left:1029.9px;top:367px;width:36px;height:22px;line-height:22px;text-align:center;font-size:15px;color:#1b1b1d;">31</div>
<div class="a" style="left:1137px;top:482px;width:105px;height:35px;background:#1976d2;border-radius:4px;box-shadow:0 2px 3px rgba(0,0,0,.25);"></div>
<div class="t" style="left:1137px;top:482px;width:105px;height:35px;line-height:35px;text-align:center;font-size:15px;color:#fff;">Выгрузить</div>
<div class="a" style="left:1258px;top:90px;width:399px;height:143px;background:#f3f3f6;border-radius:4px;box-shadow:0 3px 8px rgba(0,0,0,.22),0 0 2px rgba(0,0,0,.12);"></div>
<svg class="ic" style="left:1274.00px;top:101.00px;width:24px;height:24px;color:#4a4a4f" viewBox="0 0 24 24" fill="none" stroke="currentColor" stroke-width="1.9" stroke-linecap="round" stroke-linejoin="round"><path d="M12 16V1.5M5.5 8L12 1.5 18.5 8M4 22.5h16"/></svg>
<div class="t" style="left:1315px;top:102px;width:320px;height:22px;line-height:22px;text-align:left;font-size:15px;color:#2a2a2e;">Экспорт суточного плана/факта</div>
<svg class="ic" style="left:1622.00px;top:103.50px;width:20px;height:20px;color:#4a4a4f" viewBox="0 0 24 24" fill="none" stroke="currentColor" stroke-width="1.8" stroke-linecap="round" stroke-linejoin="round"><path d="M8 2l10 10-10 10"/></svg>
<svg class="ic" style="left:1274.00px;top:149.00px;width:24px;height:24px;color:#4a4a4f" viewBox="0 0 24 24" fill="none" stroke="currentColor" stroke-width="1.9" stroke-linecap="round" stroke-linejoin="round"><path d="M12 1v14.5M5.5 9L12 15.5 18.5 9M4 22.5h16"/></svg>
<div class="t" style="left:1315px;top:150px;width:320px;height:22px;line-height:22px;text-align:left;font-size:15px;color:#2a2a2e;">Импорт суточного плана/факта</div>
<svg class="ic" style="left:1622.00px;top:151.50px;width:20px;height:20px;color:#4a4a4f" viewBox="0 0 24 24" fill="none" stroke="currentColor" stroke-width="1.8" stroke-linecap="round" stroke-linejoin="round"><path d="M8 2l10 10-10 10"/></svg>
<svg class="ic" style="left:1274.00px;top:197.00px;width:24px;height:24px;color:#4a4a4f" viewBox="0 0 24 24" fill="none" stroke="currentColor" stroke-width="1.9" stroke-linecap="round" stroke-linejoin="round"><circle cx="13.5" cy="10" r="9"/><path d="M7.5 17L1 23.5"/><circle cx="17.5" cy="18" r="5.5" fill="#f3f3f6"/><path d="M17.5 15.5v3l1.8 1.5"/></svg>
<div class="t" style="left:1315px;top:198px;width:320px;height:22px;line-height:22px;text-align:left;font-size:15px;color:#2a2a2e;">Отчет по истории ввода суточных данных</div>
<svg class="ic" style="left:1622.00px;top:199.50px;width:20px;height:20px;color:#4a4a4f" viewBox="0 0 24 24" fill="none" stroke="currentColor" stroke-width="1.8" stroke-linecap="round" stroke-linejoin="round"><path d="M8 2l10 10-10 10"/></svg>
<div class="a" style="left:620px;top:107px;width:34px;height:38px;border:3.2px solid #000;border-radius:50%;background:#fff;"></div>
<div class="t" style="left:620px;top:107px;width:34px;height:38px;line-height:38px;text-align:center;font-size:20px;color:#000;">4</div>
<svg class="ic" style="left:652px;top:120px;width:69px;height:12px" viewBox="0 0 69 12"><path d="M0 6H60" stroke="#000" stroke-width="2.8"/><path d="M57.5 0.7L69 6L57.5 11.3z" fill="#000"/></svg>
<div class="a" style="left:620px;top:166px;width:34px;height:38px;border:3.2px solid #000;border-radius:50%;background:#fff;"></div>
<div class="t" style="left:620px;top:166px;width:34px;height:38px;line-height:38px;text-align:center;font-size:20px;color:#000;">5</div>
<svg class="ic" style="left:652px;top:179px;width:69px;height:12px" viewBox="0 0 69 12"><path d="M0 6H60" stroke="#000" stroke-width="2.8"/><path d="M57.5 0.7L69 6L57.5 11.3z" fill="#000"/></svg>
<div class="a" style="left:620px;top:360px;width:34px;height:38px;border:3.2px solid #000;border-radius:50%;background:#fff;"></div>
<div class="t" style="left:620px;top:360px;width:34px;height:38px;line-height:38px;text-align:center;font-size:20px;color:#000;">6</div>
<svg class="ic" style="left:652px;top:373px;width:69px;height:12px" viewBox="0 0 69 12"><path d="M0 6H60" stroke="#000" stroke-width="2.8"/><path d="M57.5 0.7L69 6L57.5 11.3z" fill="#000"/></svg>
<div class="a" style="left:620px;top:414px;width:34px;height:38px;border:3.2px solid #000;border-radius:50%;background:#fff;"></div>
<div class="t" style="left:620px;top:414px;width:34px;height:38px;line-height:38px;text-align:center;font-size:20px;color:#000;">7</div>
<svg class="ic" style="left:652px;top:427px;width:69px;height:12px" viewBox="0 0 69 12"><path d="M0 6H60" stroke="#000" stroke-width="2.8"/><path d="M57.5 0.7L69 6L57.5 11.3z" fill="#000"/></svg>
<div class="a" style="left:1303.6px;top:263.3px;width:34px;height:38px;border:3.2px solid #000;border-radius:50%;background:#fff;"></div>
<div class="t" style="left:1303.6px;top:263.3px;width:34px;height:38px;line-height:38px;text-align:center;font-size:20px;color:#000;">8</div>
<svg class="ic" style="left:1238px;top:276.3px;width:67.59999999999991px;height:12px" viewBox="0 0 67.59999999999991 12"><path d="M9 6H67.59999999999991" stroke="#000" stroke-width="2.8"/><path d="M11.5 0.7L0 6L11.5 11.3z" fill="#000"/></svg>
<div class="a" style="left:1303px;top:466px;width:34px;height:38px;border:3.2px solid #000;border-radius:50%;background:#fff;"></div>
<div class="t" style="left:1303px;top:466px;width:34px;height:38px;line-height:38px;text-align:center;font-size:20px;color:#000;">9</div>
<svg class="ic" style="left:1237px;top:479px;width:68px;height:12px" viewBox="0 0 68 12"><path d="M9 6H68" stroke="#000" stroke-width="2.8"/><path d="M11.5 0.7L0 6L11.5 11.3z" fill="#000"/></svg>
</body></html>
